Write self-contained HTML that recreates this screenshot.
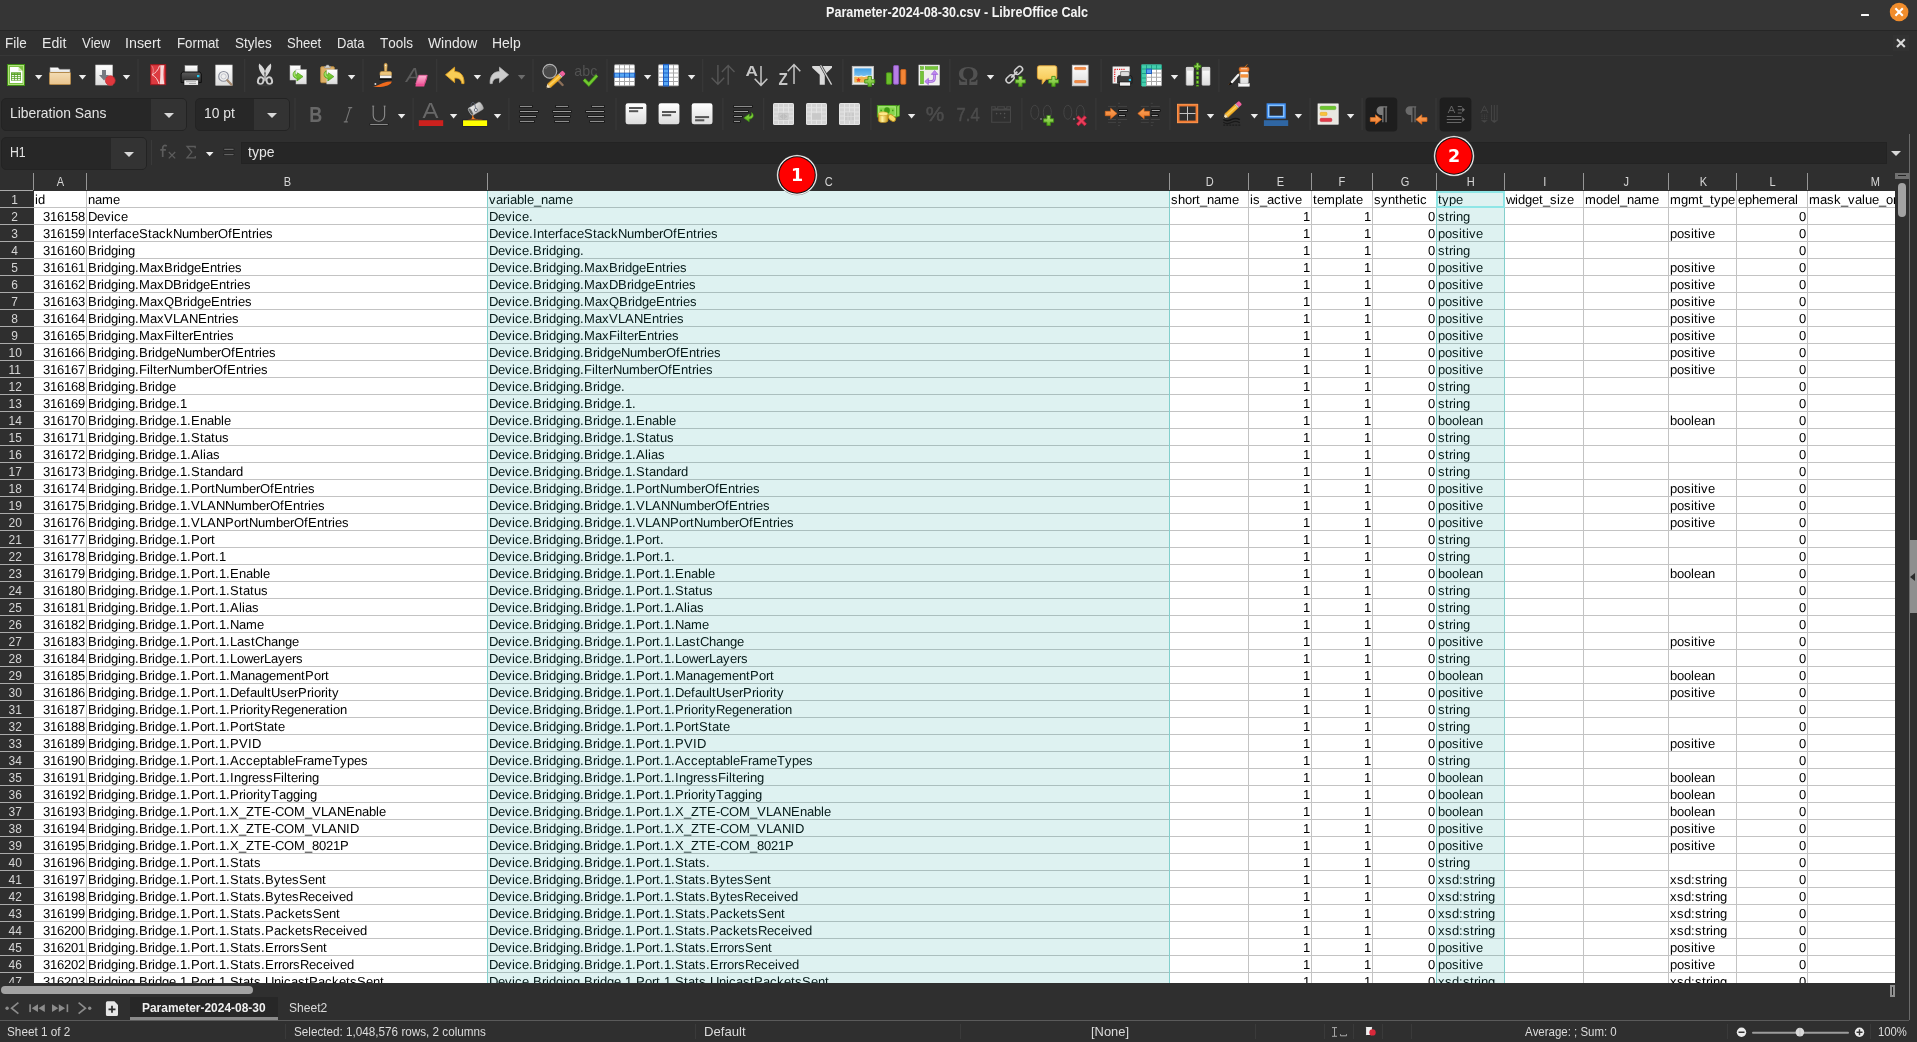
<!DOCTYPE html><html><head><meta charset="utf-8"><title>Parameter-2024-08-30.csv - LibreOffice Calc</title><style>
*{box-sizing:border-box;margin:0;padding:0}
html,body{width:1917px;height:1042px;overflow:hidden;background:#2f2f2f}
body{position:relative;font-family:"Liberation Sans",sans-serif;font-size:13px;color:#e4e4e4}
.abs{position:absolute}
#wrap{position:absolute;left:0;top:0;width:1917px;height:1042px;will-change:transform}
#title{left:0;top:0;width:1917px;height:30px;background:#353535}
#tline{left:0;top:30px;width:1917px;height:1px;background:#262626}
.menu{top:35px;line-height:16px;font-size:13.2px;color:#e6e6e6;white-space:nowrap}
.ut{line-height:20px;white-space:nowrap;font-kerning:none;transform-origin:0 0}
.sep{width:1px;background:#3a3a3a}
.combo{background:#272727;border:1px solid #232323;border-radius:5px;overflow:hidden}
.combo .btn{position:absolute;top:0;bottom:0;right:0;background:#333}
.combo .txt{position:absolute;left:8px;font-size:13.3px;color:#e0e0e0;white-space:nowrap}
.arr{width:0;height:0;border-left:4px solid transparent;border-right:4px solid transparent;border-top:5px solid #e8e8e8}
.arrb{width:0;height:0;border-left:5px solid transparent;border-right:5px solid transparent;border-top:5.2px solid #d8d8d8}
.arr.dim{border-top-color:#6a6a6a}
.arrs{width:0;height:0;border-left:3.5px solid transparent;border-right:3.5px solid transparent;border-top:4px solid #e8e8e8}
#grid{left:0;top:173px;width:1895px;height:810px;overflow:hidden;background:#fff}
#grid .hdr{background:#2f2f2f}
.ch{top:0;height:17px;line-height:18px;text-align:center;font-size:13px;color:#d6d6d6}
.ch span{display:inline-block;transform:scaleX(0.85)}
.rh span{display:inline-block;transform:scaleX(0.92)}
.rh{left:0;width:30px;height:17px;line-height:17px;text-align:center;font-size:13px;color:#d6d6d6}
.vl{top:18px;width:1px;height:800px;background:#c4c4c4}
.hl{left:33px;height:1px;width:1862px;background:#c4c4c4}
.hvl{top:0;width:1px;height:17px;background:#969696}
.c{height:17px;line-height:17px;font-size:13px;color:#000;white-space:nowrap;overflow:hidden;font-family:"Liberation Sans",sans-serif}
.c.r{text-align:right}
.sel{background:rgba(32,170,160,0.15)}
.status{top:1021px;height:21px;line-height:21px;font-size:12.6px;color:#d8d8d8;white-space:nowrap}
.ssep{top:1024px;width:1px;height:15px;background:#3a3a3a}
</style></head><body><div id="wrap">
<div id="title" class="abs"></div>
<div class="abs ut" style="left:825.60px;top:1.88px;font-size:14.20px;font-weight:bold;color:#f4f4f4;transform:scaleX(0.8862);">Parameter-2024-08-30.csv - LibreOffice Calc</div>
<div class="abs" style="left:1861px;top:13.5px;width:8.4px;height:2.9px;background:#fafafa;border-radius:0.5px"></div>
<svg class="abs" style="left:1889px;top:2px" width="20" height="20" viewBox="0 0 20 20"><circle cx="10.1" cy="10" r="9.3" fill="#f18d2c"/><path d="M6.4 6.3 L13.8 13.7 M13.8 6.3 L6.4 13.7" stroke="#fff" stroke-width="2.1"/></svg>
<div id="tline" class="abs"></div>
<div class="abs ut" style="left:4.65px;top:33.08px;font-size:14.20px;color:#e8e8e8;transform:scaleX(0.9492);">File</div>
<div class="abs ut" style="left:41.70px;top:33.08px;font-size:14.20px;color:#e8e8e8;transform:scaleX(0.9970);">Edit</div>
<div class="abs ut" style="left:81.72px;top:33.08px;font-size:14.20px;color:#e8e8e8;transform:scaleX(0.9170);">View</div>
<div class="abs ut" style="left:125.49px;top:33.08px;font-size:14.20px;color:#e8e8e8;transform:scaleX(1.0055);">Insert</div>
<div class="abs ut" style="left:176.76px;top:33.08px;font-size:14.20px;color:#e8e8e8;transform:scaleX(0.9361);">Format</div>
<div class="abs ut" style="left:234.91px;top:33.08px;font-size:14.20px;color:#e8e8e8;transform:scaleX(0.9505);">Styles</div>
<div class="abs ut" style="left:287.02px;top:33.08px;font-size:14.20px;color:#e8e8e8;transform:scaleX(0.9224);">Sheet</div>
<div class="abs ut" style="left:336.78px;top:33.08px;font-size:14.20px;color:#e8e8e8;transform:scaleX(0.9157);">Data</div>
<div class="abs ut" style="left:379.72px;top:33.08px;font-size:14.20px;color:#e8e8e8;transform:scaleX(0.9490);">Tools</div>
<div class="abs ut" style="left:427.71px;top:33.08px;font-size:14.20px;color:#e8e8e8;transform:scaleX(0.9777);">Window</div>
<div class="abs ut" style="left:492.41px;top:33.08px;font-size:14.20px;color:#e8e8e8;transform:scaleX(0.9853);">Help</div>
<div class="abs" style="left:1893px;top:35px;width:16px;height:16px;background:#323232"></div>
<svg class="abs" style="left:1896px;top:38px" width="10" height="10" viewBox="0 0 10 10"><path d="M1 1.200 L8.800 9 M8.800 1.200 L1 9" stroke="#dcdcdc" stroke-width="2"/></svg>
<div class="abs" style="left:0;top:55px;width:1893px;height:1px;background:#373737"></div>
<svg class="abs" style="left:0;top:58px" width="1917" height="78" viewBox="0 58 1917 78">
<defs>
<linearGradient id="gplus" x1="0" y1="0" x2="0" y2="1"><stop offset="0" stop-color="#b6e77a"/><stop offset="1" stop-color="#5fb41f"/></linearGradient>
<linearGradient id="gpaper" x1="0" y1="0" x2="0" y2="1"><stop offset="0" stop-color="#ffffff"/><stop offset="1" stop-color="#dcdcdc"/></linearGradient>
<linearGradient id="gfold" x1="0" y1="0" x2="0" y2="1"><stop offset="0" stop-color="#f3dcb4"/><stop offset="1" stop-color="#e9c48e"/></linearGradient>
<linearGradient id="gblue" x1="0" y1="0" x2="0" y2="1"><stop offset="0" stop-color="#55a8f2"/><stop offset="1" stop-color="#2b6fd6"/></linearGradient>
<linearGradient id="gprn" x1="0" y1="0" x2="0" y2="1"><stop offset="0" stop-color="#5a5a5a"/><stop offset="1" stop-color="#2a2a2a"/></linearGradient>
<linearGradient id="gyel" x1="0" y1="0" x2="0" y2="1"><stop offset="0" stop-color="#fde28a"/><stop offset="1" stop-color="#f7c54a"/></linearGradient>
<linearGradient id="gora" x1="0" y1="0" x2="0" y2="1"><stop offset="0" stop-color="#fba65c"/><stop offset="1" stop-color="#ee7a2c"/></linearGradient>
<linearGradient id="ggrn" x1="0" y1="0" x2="0" y2="1"><stop offset="0" stop-color="#9be04e"/><stop offset="1" stop-color="#57b11c"/></linearGradient>
<linearGradient id="gpink" x1="0" y1="0" x2="0" y2="1"><stop offset="0" stop-color="#fbb4d2"/><stop offset="1" stop-color="#f0639f"/></linearGradient>
<linearGradient id="gsky" x1="0" y1="0" x2="0" y2="1"><stop offset="0" stop-color="#3f9fe6"/><stop offset="1" stop-color="#a9dcf5"/></linearGradient>
<linearGradient id="ggold" x1="0" y1="0" x2="1" y2="0"><stop offset="0" stop-color="#d9a520"/><stop offset="0.4" stop-color="#fff3a0"/><stop offset="1" stop-color="#c99718"/></linearGradient>
<linearGradient id="gbucket" x1="0" y1="0" x2="1" y2="1"><stop offset="0" stop-color="#f4f4f4"/><stop offset="1" stop-color="#a8a8a8"/></linearGradient>
</defs>
<rect x="7.5" y="64.5" width="17" height="21" fill="#7cc242" stroke="#3f8f14" stroke-width="1"/>
<rect x="8.5" y="65.5" width="15" height="19" fill="none" stroke="#b3e07f" stroke-width="1"/>
<path d="M10 67 h8.5 l4 4 v12 h-12.5z" fill="#fff"/>
<path d="M18.5 67 l4 4 h-4z" fill="#cfe9b0"/>
<rect x="11" y="72.300" width="10" height="8.400" fill="#5aa02c"/>
<path d="M11.800 75h2.300v1.200h-2.300zM14.900 75h2.300v1.200h-2.300zM18 75h2.300v1.200h-2.300zM11.800 77h2.300v1.200h-2.300zM14.900 77h2.300v1.200h-2.300zM18 77h2.300v1.200h-2.300zM11.800 79h2.300v1.200h-2.300zM14.900 79h2.300v1.200h-2.300zM18 79h2.300v1.200h-2.300z" fill="#eef8e2"/>
<path d="M11.800 73.100h2.300v0.700h-2.300zM14.900 73.100h2.300v0.700h-2.300zM18 73.100h2.300v0.700h-2.300z" fill="#8fcc5a"/>
<path d="M35.00 75.10 h7.400 l-3.700 4.300z" fill="#ececec"/>
<path d="M50 67.5 h8 l1.5 1.8 h10.5 v4 h-20z" fill="url(#gpaper)" stroke="#8a8a8a" stroke-width="0.6"/>
<rect x="49.5" y="72.5" width="21" height="12" rx="0.8" fill="url(#gfold)" stroke="#b48a4c" stroke-width="1"/>
<path d="M78.80 75.10 h7.400 l-3.700 4.300z" fill="#ececec"/>
<rect x="95.7" y="65" width="16.8" height="20" fill="url(#gpaper)" stroke="#c8c8c8" stroke-width="0.6"/>
<path d="M102 70 h4 v5 h3 l-5 5.5 l-5 -5.5 h3z" fill="#767a82"/>
<circle cx="110.3" cy="80.6" r="4.9" fill="#e0383e" stroke="#b9262c" stroke-width="0.7"/>
<path d="M122.80 75.10 h7.400 l-3.700 4.300z" fill="#ececec"/>
<rect x="137.5" y="59" width="1" height="33" fill="#3b3b3b"/>
<rect x="150.700" y="64.700" width="15" height="20" fill="#dc3a40" stroke="#a3181f" stroke-width="1"/>
<path d="M160.200 65.300 C160.600 70 160.400 79 159.700 84.300 L164.300 84.300 C163.300 78 163.200 71 164.200 65.300Z" fill="#fff" opacity="0.800"/>
<path d="M159.600 65.600 C158.300 70 155.500 73.200 152 74.700 C155.500 76.300 158 80 159 84" fill="none" stroke="#fbdcdc" stroke-width="0.900"/>
<path d="M151.500 65.600 C153.500 68 154 71 152.200 74.600" fill="none" stroke="#f4b8ba" stroke-width="0.600"/>
<rect x="185" y="65.7" width="12.3" height="7" fill="url(#gpaper)" stroke="#bdbdbd" stroke-width="0.5"/>
<path d="M182.5 72 h17.5 l1.3 2 v8.5 h-20.2 v-8.5z" fill="url(#gprn)" stroke="#0e0e0e" stroke-width="1"/>
<rect x="197" y="75" width="2.4" height="2.2" fill="#1ec8f0"/>
<rect x="184" y="80" width="14.4" height="5.3" fill="url(#gpaper)" stroke="#111" stroke-width="0.6"/>
<path d="M186 81.7 h10 M189 83.5 h7" stroke="#9a9a9a" stroke-width="0.8"/>
<rect x="215.7" y="65" width="16.5" height="20.3" fill="url(#gpaper)" stroke="#c8c8c8" stroke-width="0.6"/>
<circle cx="223.6" cy="76.4" r="4.9" fill="#efefef" stroke="#8a8e9c" stroke-width="1.1"/>
<circle cx="223.6" cy="76.4" r="2.6" fill="none" stroke="#b8bac4" stroke-width="0.8"/>
<path d="M227.3 80.2 l4.3 4.5" stroke="#a3876c" stroke-width="2.2" stroke-linecap="round"/>
<rect x="244.3" y="59" width="1" height="33" fill="#3b3b3b"/>
<path d="M259.200 63.600 C257.800 67.500 259.800 72.500 264.300 77.300 L266 75.600 C265.600 71 263.300 66.500 259.200 63.600z M270.800 63.600 C272.200 67.500 270.200 72.500 265.700 77.300 L264 75.600 C264.400 71 266.700 66.500 270.800 63.600z" fill="#d8d8d8"/>
<path d="M264.300 74 l0.700 -0.600 l0.700 0.600 l0.600 6 l-1.300 1.500 l-1.300 -1.500z" fill="#a8a8a8"/>
<ellipse cx="260.700" cy="80.700" rx="2.700" ry="3.400" fill="none" stroke="#cdcdcd" stroke-width="1.900" transform="rotate(18 260.700 80.700)"/>
<ellipse cx="269.300" cy="80.700" rx="2.700" ry="3.400" fill="none" stroke="#cdcdcd" stroke-width="1.900" transform="rotate(-18 269.300 80.700)"/>
<ellipse cx="265" cy="85.300" rx="8" ry="0.900" fill="#3a3a3a"/>
<rect x="290" y="65.7" width="10.3" height="14.3" fill="url(#gpaper)" stroke="#c4c4c4" stroke-width="0.5"/>
<rect x="296" y="69.7" width="10.3" height="14.3" fill="url(#gpaper)" stroke="#c4c4c4" stroke-width="0.5"/>
<g transform="translate(0.0 0)"><path d="M295.3 70.700 C292.300 72.500 291.900 77.700 297.100 78.600 L296.900 81 L303 76.600 L297.500 72.800 L297.300 75.100 C295.300 74.900 294.400 72.900 295.300 70.700Z" fill="url(#ggrn)" stroke="#4aa018" stroke-width="0.700" stroke-linejoin="round"/><path d="M294.600 72.500 C293.600 74.500 294.300 76.600 296.600 77.300" fill="none" stroke="#c6f09a" stroke-width="0.700"/></g>
<rect x="320.7" y="66.7" width="13.6" height="16" rx="1" fill="#dfb066" stroke="#b98a3f" stroke-width="0.9"/>
<path d="M324.6 68 v-1.6 h1.3 l0.6 -1.3 h2.2 l0.6 1.3 h1.3 v1.6z" fill="#d4d4d4" stroke="#8f8f8f" stroke-width="0.6"/>
<rect x="326.8" y="69.7" width="10.4" height="14.3" fill="url(#gpaper)" stroke="#c4c4c4" stroke-width="0.5"/>
<g transform="translate(30.9 0)"><path d="M295.3 70.700 C292.300 72.500 291.900 77.700 297.100 78.600 L296.900 81 L303 76.600 L297.500 72.800 L297.300 75.100 C295.300 74.900 294.400 72.900 295.300 70.700Z" fill="url(#ggrn)" stroke="#4aa018" stroke-width="0.700" stroke-linejoin="round"/><path d="M294.600 72.500 C293.600 74.500 294.300 76.600 296.600 77.300" fill="none" stroke="#c6f09a" stroke-width="0.700"/></g>
<path d="M347.90 75.10 h7.400 l-3.700 4.300z" fill="#ececec"/>
<rect x="362.5" y="59" width="1" height="33" fill="#3b3b3b"/>
<path d="M384.2 65 a1.5 1.7 0 0 1 3 0 l-0.5 6.5 h-2z" fill="#e8bf73" stroke="#c99846" stroke-width="0.6"/>
<circle cx="385.7" cy="65.3" r="0.6" fill="#fff"/>
<path d="M380 75.3 v-2.3 a1.5 1.5 0 0 1 1.5 -1.5 h8.5 a1.5 1.5 0 0 1 1.5 1.5 v2.3z" fill="#eac47c" stroke="#c99846" stroke-width="0.6"/>
<rect x="380" y="75.5" width="11.5" height="2.6" fill="#f2f2f2"/>
<rect x="379.6" y="78.8" width="12.2" height="1.3" fill="#0c0c0c"/>
<path d="M373 86.6 C377 86 380 84 383 83 C386 82 389 81.5 391.8 81.6 C391.5 84 388 85.8 384 86.4 C380 87 376 87.2 373 86.6z" fill="#f06a1c"/>
<rect x="374.6" y="83.2" width="1.6" height="1.6" fill="#f4f4f4"/>
<text x="406" y="81.8" font-family="Liberation Sans,sans-serif" font-style="italic" font-size="21" fill="#5c5c5c">A</text>
<path d="M418.8 75.3 h8.4 l-3 8.6 h-8.4z" fill="url(#gpink)" stroke="#ee5f9f" stroke-width="0.8" stroke-linejoin="round"/>
<path d="M415.8 83.9 h8.4 v2.6 h-8.8z" fill="#ec4f93"/>
<path d="M424.2 83.9 l3 -8.6 v2.8 l-3 8.4z" fill="#e0508e"/>
<rect x="436.3" y="59" width="1" height="33" fill="#3b3b3b"/>
<path d="M445.5 74.8 L454.6 67.2 V71.6 C460.5 71.6 464.3 75.5 464 83.6 L461.8 83.6 C461.5 79.6 459 78 454.6 78 V82.6z" fill="#f9cd55" stroke="#e3a322" stroke-width="0.9" stroke-linejoin="round"/>
<path d="M473.70 75.10 h7.400 l-3.700 4.300z" fill="#ececec"/>
<path d="M508.6 74.8 L499.5 67.2 V71.6 C493.6 71.6 489.8 75.5 490.1 83.6 L492.3 83.6 C492.6 79.6 495.1 78 499.5 78 V82.6z" fill="#cdcdcd" stroke="#b8b8b8" stroke-width="0.8" stroke-linejoin="round"/>
<path d="M517.90 75.10 h7.400 l-3.700 4.300z" fill="#6c6c6c"/>
<rect x="532.5" y="59" width="1" height="33" fill="#3b3b3b"/>
<path d="M555 77 l7.6 8" stroke="#8c6f58" stroke-width="2.4" stroke-linecap="round"/>
<circle cx="549.8" cy="71.2" r="6.9" fill="#4a4a4a" stroke="#b4b4b4" stroke-width="1.2"/>
<path d="M545.5 69 a5 5 0 0 1 6 -2.5" stroke="#666" stroke-width="1.2" fill="none"/>
<g transform="rotate(-42 556.5 79)"><rect x="546.5" y="76.6" width="14.5" height="4.8" fill="#f5b52c" stroke="#d98e10" stroke-width="0.5"/><rect x="546.5" y="78.2" width="14.5" height="1.4" fill="#fbd060"/><rect x="561" y="76.6" width="1.5" height="4.8" fill="#c8c8c8"/><path d="M562.5 76.6 h3 a1.2 1.2 0 0 1 1.2 1.2 v2.4 a1.2 1.2 0 0 1 -1.2 1.2 h-3z" fill="#f0609c"/><path d="M546.5 76.6 l-4 2.4 l4 2.4z" fill="#f7e2b8"/><path d="M543.9 78.1 l-1.4 0.9 l1.4 0.9z" fill="#222"/></g>
<text x="574.3" y="76.2" font-family="Liberation Sans,sans-serif" font-size="14.5" fill="#525252" textLength="23" lengthAdjust="spacingAndGlyphs">abc</text>
<path d="M584 79.6 l4.8 4.8 l8.2 -9" fill="none" stroke="#3f8f14" stroke-width="3.6" stroke-linejoin="miter"/>
<path d="M584 79.6 l4.8 4.8 l8.2 -9" fill="none" stroke="#72c832" stroke-width="2.2" stroke-linejoin="miter"/>
<rect x="606.5" y="59" width="1" height="33" fill="#3b3b3b"/>
<rect x="614.00" y="64.20" width="21.00" height="22.00" rx="1.5" fill="#a9a9a9"/>
<rect x="613.70" y="72.60" width="21.60" height="5.20" fill="#1f5fc4"/>
<path d="M615.00 65.20h4.00v3.20h-4.00zM620.00 65.20h4.00v3.20h-4.00zM625.00 65.20h4.00v3.20h-4.00zM630.00 65.20h4.00v3.20h-4.00zM615.00 69.40h4.00v3.20h-4.00zM620.00 69.40h4.00v3.20h-4.00zM625.00 69.40h4.00v3.20h-4.00zM630.00 69.40h4.00v3.20h-4.00zM615.00 77.80h4.00v3.20h-4.00zM620.00 77.80h4.00v3.20h-4.00zM625.00 77.80h4.00v3.20h-4.00zM630.00 77.80h4.00v3.20h-4.00zM615.00 82.00h4.00v3.20h-4.00zM620.00 82.00h4.00v3.20h-4.00zM625.00 82.00h4.00v3.20h-4.00zM630.00 82.00h4.00v3.20h-4.00z" fill="#ffffff"/>
<path d="M615.00 73.60h4.00v3.20h-4.00zM620.00 73.60h4.00v3.20h-4.00zM625.00 73.60h4.00v3.20h-4.00zM630.00 73.60h4.00v3.20h-4.00z" fill="#58a8f4"/>
<path d="M643.90 75.10 h7.400 l-3.700 4.300z" fill="#ececec"/>
<rect x="658.00" y="64.20" width="21.00" height="22.00" rx="1.5" fill="#a9a9a9"/>
<rect x="663.00" y="63.90" width="6.00" height="22.60" fill="#1f5fc4"/>
<path d="M659.00 65.20h4.00v3.20h-4.00zM669.00 65.20h4.00v3.20h-4.00zM674.00 65.20h4.00v3.20h-4.00zM659.00 69.40h4.00v3.20h-4.00zM669.00 69.40h4.00v3.20h-4.00zM674.00 69.40h4.00v3.20h-4.00zM659.00 73.60h4.00v3.20h-4.00zM669.00 73.60h4.00v3.20h-4.00zM674.00 73.60h4.00v3.20h-4.00zM659.00 77.80h4.00v3.20h-4.00zM669.00 77.80h4.00v3.20h-4.00zM674.00 77.80h4.00v3.20h-4.00zM659.00 82.00h4.00v3.20h-4.00zM669.00 82.00h4.00v3.20h-4.00zM674.00 82.00h4.00v3.20h-4.00z" fill="#ffffff"/>
<path d="M664.00 65.20h4.00v3.20h-4.00zM664.00 69.40h4.00v3.20h-4.00zM664.00 73.60h4.00v3.20h-4.00zM664.00 77.80h4.00v3.20h-4.00zM664.00 82.00h4.00v3.20h-4.00z" fill="#58a8f4"/>
<path d="M687.90 75.10 h7.400 l-3.700 4.300z" fill="#ececec"/>
<rect x="702.3" y="59" width="1" height="33" fill="#3b3b3b"/>
<path d="M717.9 65 V84 M711.6 77.8 L717.9 84.3 L724.2 77.8 M728.2 84.7 V65.6 M721.9 72 L728.2 65.4 L734.5 72" fill="none" stroke="#575757" stroke-width="1.4"/>
<text x="745.6" y="76.3" font-family="Liberation Sans,sans-serif" font-weight="bold" font-size="14.8" fill="#c6c6c6" textLength="12.400" lengthAdjust="spacingAndGlyphs">A</text>
<path d="M761 66 V85 M754.7 78.8 L761 85.3 L767.3 78.8" fill="none" stroke="#c6c6c6" stroke-width="1.5"/>
<text x="778.4" y="84.7" font-family="Liberation Sans,sans-serif" font-weight="bold" font-size="16.3" fill="#c6c6c6" textLength="9.300" lengthAdjust="spacingAndGlyphs">Z</text>
<path d="M794 84 V64.8 M787.7 71.2 L794 64.6 L800.3 71.2" fill="none" stroke="#c6c6c6" stroke-width="1.5"/>
<path d="M812.2 66 h19.8 v1.8 l-7.2 7 v9.9 h-5.1 v-9.9 l-7.5 -7z" fill="#dadada"/>
<path d="M820.6 65.2 L831.6 84.6" stroke="#2f2f2f" stroke-width="2.6"/>
<path d="M820.6 65.2 L831.6 84.6" stroke="#cfcfcf" stroke-width="1.3"/>
<rect x="842.4" y="59" width="1" height="33" fill="#3b3b3b"/>
<rect x="852.3" y="66.4" width="21.2" height="18.2" fill="#ececec" stroke="#bdbdbd" stroke-width="0.9"/>
<rect x="854.3" y="68.4" width="17.2" height="14.2" fill="url(#gsky)"/>
<path d="M854.3 76.5 c2 -1.2 3.5 0.8 5.5 -0.2 c2 -1 3.5 1 5.5 0 c2 -1 4 0.2 6.200 -0.6 v6.9 h-17.2z" fill="#f2b552"/>
<path d="M854.3 76.5 c2 -1.2 3.5 0.8 5.5 -0.2 c2 -1 3.5 1 5.5 0 c2 -1 4 0.2 6.200 -0.6" fill="none" stroke="#fff" stroke-width="0.9"/>
<path d="M858.5 77.5 l1 1.5 l1.4 0.4 l-1.2 1 l0.2 1.6 l-1.4 -0.8 l-1.4 0.8 l0.3 -1.6 l-1.2 -1 l1.5 -0.4z" fill="#ee3a1c"/>
<path d="M868.00 76.40 h3.40 v3.30 h3.30 v3.40 h-3.30 v3.30 h-3.40 v-3.30 h-3.30 v-3.40 h3.30 z" fill="url(#gplus)" stroke="#3f8f14" stroke-width="0.9" stroke-linejoin="round"/>
<rect x="886.4" y="72.8" width="5" height="11.4" rx="0.8" fill="#6cbf2c" stroke="#4a9a14" stroke-width="0.8"/>
<rect x="893.6" y="65.6" width="5" height="18.6" rx="0.8" fill="#b77fe6" stroke="#9257c9" stroke-width="0.8"/>
<rect x="900.8" y="69.6" width="5" height="14.6" rx="0.8" fill="#f38636" stroke="#d9661a" stroke-width="0.8"/>
<rect x="919" y="65.2" width="20.2" height="19.8" fill="#efefed" stroke="#fafafa" stroke-width="0.8"/>
<rect x="920.4" y="66.6" width="3.2" height="2.8" fill="#74c438" stroke="#56a81e" stroke-width="0.5"/>
<rect x="925.2" y="66.6" width="12.6" height="2.8" fill="#74c438" stroke="#56a81e" stroke-width="0.5"/>
<rect x="920.4" y="71.2" width="3.2" height="12.6" fill="#74c438" stroke="#56a81e" stroke-width="0.5"/>
<path d="M927.5 81.5 h3.5 c2.8 0 3.6 -1.8 3.6 -4.3 v-3.5" fill="none" stroke="#9b5fd6" stroke-width="2.6"/>
<path d="M927.5 81.5 h3.5 c2.8 0 3.6 -1.8 3.6 -4.3 v-3.5" fill="none" stroke="#c99cf2" stroke-width="1.2"/>
<path d="M931.3 74.4 l3.3 -3.9 l3.3 3.9z M928.4 78.3 l-3.6 3.2 l3.6 3.200z" fill="#c08af0" stroke="#9b5fd6" stroke-width="0.7" stroke-linejoin="round"/>
<rect x="949.4" y="59" width="1" height="33" fill="#3b3b3b"/>
<text x="957.800" y="84.700" font-family="Liberation Serif,serif" font-weight="bold" font-size="27" fill="#525252" textLength="21" lengthAdjust="spacingAndGlyphs">&#937;</text>
<path d="M986.80 75.10 h7.400 l-3.700 4.300z" fill="#ececec"/>
<g transform="rotate(-45 1014.3 74.6)" fill="none" stroke="#d2d2d2" stroke-width="1.5"><rect x="1003.800" y="71.800" width="9" height="5.600" rx="2.800"/><rect x="1015.800" y="71.800" width="9" height="5.600" rx="2.800"/><path d="M1010 74.600 h8.600" stroke-width="1.800"/></g>
<path d="M1018.70 76.40 h3.40 v3.30 h3.30 v3.40 h-3.30 v3.30 h-3.40 v-3.30 h-3.30 v-3.40 h3.30 z" fill="url(#gplus)" stroke="#3f8f14" stroke-width="0.9" stroke-linejoin="round"/>
<path d="M1039.4 65.8 h15.4 a2 2 0 0 1 2 2 v9.400 a2 2 0 0 1 -2 2 h-8.6 l-4 5 v-5 h-2.800 a2 2 0 0 1 -2 -2 v-9.400 a2 2 0 0 1 2 -2z" fill="url(#gyel)" stroke="#e7a73a" stroke-width="0.9"/>
<path d="M1051.80 76.40 h3.40 v3.30 h3.30 v3.40 h-3.30 v3.30 h-3.40 v-3.30 h-3.30 v-3.40 h3.30 z" fill="url(#gplus)" stroke="#3f8f14" stroke-width="0.9" stroke-linejoin="round"/>
<rect x="1072.3" y="65.2" width="15.8" height="20.6" fill="url(#gpaper)" stroke="#c9c9c9" stroke-width="0.8"/>
<rect x="1074.6" y="67.3" width="11.2" height="2.3" rx="0.6" fill="#f28a42" stroke="#e0661c" stroke-width="0.5"/>
<rect x="1074.6" y="80.5" width="11.2" height="2.3" rx="0.6" fill="#f28a42" stroke="#e0661c" stroke-width="0.5"/>
<rect x="1100.6" y="59" width="1" height="33" fill="#3b3b3b"/>
<rect x="1112.9" y="66.8" width="16.6" height="16.4" fill="#f3f3f3" stroke="#cfcfcf" stroke-width="0.6"/>
<path d="M1114.6 69.4 h11" stroke="#e8262a" stroke-width="1.3" stroke-dasharray="1.2 1"/>
<path d="M1114.7 69.4 v12.5" stroke="#e8262a" stroke-width="1.3" stroke-dasharray="1.2 1"/>
<path d="M1118.600 75.700 h12.400 l1 1.500 v6 h-14.400 v-6z" fill="#3c3c3c" stroke="#141414" stroke-width="0.800"/>
<rect x="1120.800" y="71.800" width="8.400" height="4.400" fill="#f4f4f4" stroke="#3a3a3a" stroke-width="0.700"/>
<rect x="1122" y="73" width="6" height="2.400" fill="#dcdcdc"/>
<rect x="1128.8" y="78.900" width="2.2" height="2" fill="#1ec8f0"/>
<rect x="1119.7" y="82" width="10.6" height="4" fill="#f2f2f2" stroke="#0c0c0c" stroke-width="0.6"/>
<rect x="1141.00" y="64.20" width="21.00" height="22.00" rx="1.5" fill="#a9a9a9"/>
<path d="M1142.00 65.20h4.00v3.20h-4.00zM1147.00 65.20h4.00v3.20h-4.00zM1152.00 65.20h4.00v3.20h-4.00zM1157.00 65.20h4.00v3.20h-4.00zM1142.00 69.40h4.00v3.20h-4.00zM1147.00 69.40h4.00v3.20h-4.00zM1152.00 69.40h4.00v3.20h-4.00zM1157.00 69.40h4.00v3.20h-4.00zM1142.00 73.60h4.00v3.20h-4.00zM1147.00 73.60h4.00v3.20h-4.00zM1152.00 73.60h4.00v3.20h-4.00zM1157.00 73.60h4.00v3.20h-4.00zM1142.00 77.80h4.00v3.20h-4.00zM1147.00 77.80h4.00v3.20h-4.00zM1152.00 77.80h4.00v3.20h-4.00zM1157.00 77.80h4.00v3.20h-4.00zM1142.00 82.00h4.00v3.20h-4.00zM1147.00 82.00h4.00v3.20h-4.00zM1152.00 82.00h4.00v3.20h-4.00zM1157.00 82.00h4.00v3.20h-4.00z" fill="#ffffff"/>
<path d="M1141 65.700 a1.500 1.500 0 0 1 1.500 -1.500 h18 a1.500 1.500 0 0 1 1.500 1.500 v3.900 h-16 v16.600 h-3.500 a1.500 1.500 0 0 1 -1.500 -1.500z" fill="#1fa084"/>
<path d="M1142 65.200h4v3.400h-4zM1147 65.200h4v3.400h-4zM1152 65.200h4v3.400h-4zM1157 65.200h4v3.400h-4zM1142 69.600h4v3.400h-4zM1142 74h4v3.400h-4zM1142 78.400h4v3.400h-4zM1142 82.800h4v3.400h-4z" fill="#45cfae"/>
<rect x="1146.500" y="69.100" width="5" height="4.400" fill="#5a9ef0" stroke="#1f5fc4" stroke-width="1"/>
<path d="M1170.80 75.10 h7.400 l-3.700 4.300z" fill="#ececec"/>
<rect x="1186.2" y="67.3" width="7.200" height="18" rx="0.8" fill="url(#gpaper)" stroke="#c8c8c8" stroke-width="0.6"/>
<rect x="1202" y="67.3" width="8" height="18" rx="0.800" fill="url(#gpaper)" stroke="#c8c8c8" stroke-width="0.6"/>
<rect x="1186.2" y="67.3" width="7.2" height="3.400" fill="#d4d4d4"/><rect x="1202" y="67.3" width="8" height="3.400" fill="#d4d4d4"/>
<path d="M1197.5 71.500 v15" stroke="#4a9a14" stroke-width="2.800" stroke-dasharray="3.200 1.300"/>
<path d="M1197.5 72 v14" stroke="#86d23c" stroke-width="1.300" stroke-dasharray="2.2 2.300"/>
<path d="M1196.38 63.10 h2.24 v2.18 h2.18 v2.24 h-2.18 v2.18 h-2.24 v-2.18 h-2.18 v-2.24 h2.18 z" fill="url(#gplus)" stroke="#3f8f14" stroke-width="0.9" stroke-linejoin="round"/>
<rect x="1218.4" y="59" width="1" height="33" fill="#3b3b3b"/>
<path d="M1229 84.800 L1247.300 64.400" stroke="#e07a1a" stroke-width="0.9"/>
<path d="M1231.800 82.200 L1238.200 75" stroke="#ececec" stroke-width="2.400" stroke-linecap="round"/>
<path d="M1228.600 85.200 l3.800 -1.200 l-2 -2z" fill="#0a0a0a"/>
<rect x="1240.300" y="71.500" width="8" height="12" rx="1.500" fill="url(#gpaper)" stroke="#bdbdbd" stroke-width="0.6"/>
<rect x="1239.200" y="67.200" width="9.800" height="4.400" rx="1.500" fill="#f28336" stroke="#d9661a" stroke-width="0.6"/>
<path d="M1241 68.800 h6.200" stroke="#fbd2b0" stroke-width="1"/>
<rect x="1240.300" y="74.200" width="8" height="3.400" fill="#f6923e"/>
<rect x="1238.300" y="83.600" width="11.200" height="2.800" fill="#f6f6f6" stroke="#cfcfcf" stroke-width="0.5"/>
<rect x="294.5" y="98" width="1" height="32" fill="#3b3b3b"/>
<text x="309.3" y="122.3" font-family="Liberation Sans,sans-serif" font-weight="bold" font-size="21.4" fill="#686868" textLength="13" lengthAdjust="spacingAndGlyphs">B</text>
<path d="M348.2 107.600 h4 M343.800 121.900 h4 M350.300 107.600 L345.700 121.900" stroke="#777" stroke-width="1.1" fill="none"/>
<path d="M373.200 106 V115.600 a5.700 5.700 0 0 0 11.400 0 V106" stroke="#8a8a8a" stroke-width="1.1" fill="none"/>
<path d="M372.200 106.100 h2 M383.600 106.100 h2" stroke="#8a8a8a" stroke-width="0.9"/>
<rect x="369.300" y="123.200" width="19.400" height="2.300" rx="0.8" fill="#1e1e1e"/><rect x="370.200" y="123.900" width="17.600" height="0.9" fill="#a6a6a6"/>
<path d="M397.90 114.10 h7.400 l-3.700 4.300z" fill="#ececec"/>
<rect x="412.6" y="98" width="1" height="32" fill="#3b3b3b"/>
<text x="422.6" y="118" font-family="Liberation Sans,sans-serif" font-size="21.5" fill="#686868" textLength="16" lengthAdjust="spacingAndGlyphs">A</text>
<rect x="418.800" y="120.200" width="24.400" height="5.800" fill="#cc211e"/>
<path d="M449.90 114.10 h7.400 l-3.700 4.300z" fill="#ececec"/>
<g transform="rotate(-31 470.900 111.700)"><path d="M470.900 107.500 h11.400 a1.800 4.200 0 0 1 0 8.400 h-11.400z" fill="url(#gbucket)" stroke="#9a9a9a" stroke-width="0.400"/><ellipse cx="470.900" cy="111.700" rx="1.500" ry="4.200" fill="#5c5e5c" stroke="#cfd2d6" stroke-width="0.600"/></g>
<path d="M471.300 106.300 C470.300 103 473.500 100.800 474.600 104 C475.200 106 475.500 107.500 475.800 108.500" fill="none" stroke="#596070" stroke-width="0.900"/>
<circle cx="475.900" cy="110" r="1.500" fill="#fff" stroke="#4e5566" stroke-width="0.800"/>
<path d="M472.600 114.500 c0.800 1.500 1 3 2 4 c1.500 0.800 6 0.500 8.500 1.300 h-16 c2.500 -0.600 4 -0.500 4.800 -1.600 c0.600 -1 0.300 -2.500 0.700 -3.700z" fill="#f47c20"/>
<rect x="463" y="120.200" width="24.300" height="5.800" fill="#ffff00"/>
<rect x="462.800" y="119.900" width="24.700" height="6.400" fill="none" stroke="#17172c" stroke-width="0.500"/>
<path d="M493.80 114.10 h7.400 l-3.700 4.300z" fill="#ececec"/>
<rect x="508.4" y="98" width="1" height="32" fill="#3b3b3b"/>
<rect x="519.0" y="104.9" width="14.0" height="3" rx="1.2" fill="#1c1c1c"/>
<rect x="520.0" y="105.9" width="12.0" height="1" fill="#9a9a9a"/>
<rect x="519.0" y="110.0" width="20.0" height="3" rx="1.2" fill="#1c1c1c"/>
<rect x="520.0" y="111.0" width="18.0" height="1" fill="#9a9a9a"/>
<rect x="519.0" y="115.0" width="18.0" height="3" rx="1.2" fill="#1c1c1c"/>
<rect x="520.0" y="116.0" width="16.0" height="1" fill="#9a9a9a"/>
<rect x="519.0" y="119.9" width="16.0" height="3" rx="1.2" fill="#1c1c1c"/>
<rect x="520.0" y="120.9" width="14.0" height="1" fill="#9a9a9a"/>
<rect x="555.0" y="104.9" width="14.0" height="3" rx="1.2" fill="#1c1c1c"/>
<rect x="556.0" y="105.9" width="12.0" height="1" fill="#9a9a9a"/>
<rect x="552.0" y="110.0" width="20.0" height="3" rx="1.2" fill="#1c1c1c"/>
<rect x="553.0" y="111.0" width="18.0" height="1" fill="#9a9a9a"/>
<rect x="553.0" y="115.0" width="18.0" height="3" rx="1.2" fill="#1c1c1c"/>
<rect x="554.0" y="116.0" width="16.0" height="1" fill="#9a9a9a"/>
<rect x="554.0" y="119.9" width="16.0" height="3" rx="1.2" fill="#1c1c1c"/>
<rect x="555.0" y="120.9" width="14.0" height="1" fill="#9a9a9a"/>
<rect x="591.0" y="104.9" width="14.0" height="3" rx="1.2" fill="#1c1c1c"/>
<rect x="592.0" y="105.9" width="12.0" height="1" fill="#9a9a9a"/>
<rect x="585.0" y="110.0" width="20.0" height="3" rx="1.2" fill="#1c1c1c"/>
<rect x="586.0" y="111.0" width="18.0" height="1" fill="#9a9a9a"/>
<rect x="587.0" y="115.0" width="18.0" height="3" rx="1.2" fill="#1c1c1c"/>
<rect x="588.0" y="116.0" width="16.0" height="1" fill="#9a9a9a"/>
<rect x="589.0" y="119.9" width="16.0" height="3" rx="1.2" fill="#1c1c1c"/>
<rect x="590.0" y="120.9" width="14.0" height="1" fill="#9a9a9a"/>
<rect x="615.5" y="98" width="1" height="32" fill="#3b3b3b"/>
<rect x="625.6" y="103.300" width="20.800" height="21" rx="2.300" fill="url(#gpaper)"/>
<rect x="629.0" y="107.0" width="14" height="2" fill="#555"/><rect x="629.0" y="110.2" width="9.200" height="2" fill="#555"/>
<rect x="658.6" y="103.300" width="20.800" height="21" rx="2.300" fill="url(#gpaper)"/>
<rect x="662.0" y="111.0" width="14" height="2" fill="#555"/><rect x="662.0" y="114.2" width="9.200" height="2" fill="#555"/>
<rect x="691.7" y="103.300" width="20.800" height="21" rx="2.300" fill="url(#gpaper)"/>
<rect x="695.1" y="116.1" width="14" height="2" fill="#555"/><rect x="695.1" y="119.3" width="9.200" height="2" fill="#555"/>
<rect x="722.4" y="98" width="1" height="32" fill="#3b3b3b"/>
<rect x="733.0" y="104.9" width="20.0" height="3" rx="1.2" fill="#1c1c1c"/>
<rect x="734.0" y="105.9" width="18.0" height="1" fill="#9a9a9a"/>
<rect x="733.0" y="110.0" width="16.0" height="3" rx="1.2" fill="#1c1c1c"/>
<rect x="734.0" y="111.0" width="14.0" height="1" fill="#9a9a9a"/>
<rect x="733.0" y="115.0" width="10.0" height="3" rx="1.2" fill="#1c1c1c"/>
<rect x="734.0" y="116.0" width="8.0" height="1" fill="#9a9a9a"/>
<rect x="733.0" y="119.9" width="8.0" height="3" rx="1.2" fill="#1c1c1c"/>
<rect x="734.0" y="120.9" width="6.0" height="1" fill="#9a9a9a"/>
<path d="M751.600 112.600 c2.800 2.200 2 6.400 -2.400 6.600 v2.500 l-5.400 -3.800 l5.400 -3.800 v2.300 c2.200 0 3.100 -1.600 2.400 -3.800z" fill="url(#ggrn)" stroke="#3f9414" stroke-width="0.700" stroke-linejoin="round"/>
<rect x="763.3" y="98" width="1" height="32" fill="#3b3b3b"/>
<rect x="773.00" y="103.00" width="21.00" height="22.00" rx="1.5" fill="#e4e4e4"/>
<path d="M774.00 104.00h4.00v3.20h-4.00zM779.00 104.00h4.00v3.20h-4.00zM784.00 104.00h4.00v3.20h-4.00zM789.00 104.00h4.00v3.20h-4.00zM774.00 108.20h4.00v3.20h-4.00zM779.00 108.20h4.00v3.20h-4.00zM784.00 108.20h4.00v3.20h-4.00zM789.00 108.20h4.00v3.20h-4.00zM774.00 112.40h4.00v3.20h-4.00zM779.00 112.40h4.00v3.20h-4.00zM784.00 112.40h4.00v3.20h-4.00zM789.00 112.40h4.00v3.20h-4.00zM774.00 116.60h4.00v3.20h-4.00zM779.00 116.60h4.00v3.20h-4.00zM784.00 116.60h4.00v3.20h-4.00zM789.00 116.60h4.00v3.20h-4.00zM774.00 120.80h4.00v3.20h-4.00zM779.00 120.80h4.00v3.20h-4.00zM784.00 120.80h4.00v3.20h-4.00zM789.00 120.80h4.00v3.20h-4.00z" fill="#d4d4d4"/>
<rect x="778.800" y="113.200" width="9.400" height="6.500" fill="#cdcdcd" stroke="#bdbdbd" stroke-width="0.600"/><path d="M782.800 114.400 v4.200 l-2.800 -2.100z M784.300 114.400 v4.200 l2.800 -2.100z" fill="#c0c0c0" stroke="#b0b0b0" stroke-width="0.400"/>
<rect x="806.00" y="103.00" width="21.00" height="22.00" rx="1.5" fill="#e4e4e4"/>
<path d="M807.00 104.00h4.00v3.20h-4.00zM812.00 104.00h4.00v3.20h-4.00zM817.00 104.00h4.00v3.20h-4.00zM822.00 104.00h4.00v3.20h-4.00zM807.00 108.20h4.00v3.20h-4.00zM812.00 108.20h4.00v3.20h-4.00zM817.00 108.20h4.00v3.20h-4.00zM822.00 108.20h4.00v3.20h-4.00zM807.00 112.40h4.00v3.20h-4.00zM812.00 112.40h4.00v3.20h-4.00zM817.00 112.40h4.00v3.20h-4.00zM822.00 112.40h4.00v3.20h-4.00zM807.00 116.60h4.00v3.20h-4.00zM812.00 116.60h4.00v3.20h-4.00zM817.00 116.60h4.00v3.20h-4.00zM822.00 116.60h4.00v3.20h-4.00zM807.00 120.80h4.00v3.20h-4.00zM812.00 120.80h4.00v3.20h-4.00zM817.00 120.80h4.00v3.20h-4.00zM822.00 120.80h4.00v3.20h-4.00z" fill="#d4d4d4"/>
<rect x="812" y="113.200" width="9.200" height="6.500" fill="#c9c9c9"/>
<rect x="839.00" y="103.00" width="21.00" height="22.00" rx="1.5" fill="#e4e4e4"/>
<path d="M840.00 104.00h4.00v3.20h-4.00zM845.00 104.00h4.00v3.20h-4.00zM850.00 104.00h4.00v3.20h-4.00zM855.00 104.00h4.00v3.20h-4.00zM840.00 108.20h4.00v3.20h-4.00zM845.00 108.20h4.00v3.20h-4.00zM850.00 108.20h4.00v3.20h-4.00zM855.00 108.20h4.00v3.20h-4.00zM840.00 112.40h4.00v3.20h-4.00zM845.00 112.40h4.00v3.20h-4.00zM850.00 112.40h4.00v3.20h-4.00zM855.00 112.40h4.00v3.20h-4.00zM840.00 116.60h4.00v3.20h-4.00zM845.00 116.60h4.00v3.20h-4.00zM850.00 116.60h4.00v3.20h-4.00zM855.00 116.60h4.00v3.20h-4.00zM840.00 120.80h4.00v3.20h-4.00zM845.00 120.80h4.00v3.20h-4.00zM850.00 120.80h4.00v3.20h-4.00zM855.00 120.80h4.00v3.20h-4.00z" fill="#d4d4d4"/>
<rect x="845" y="112.500" width="9" height="8" fill="#cacaca"/><path d="M848 112.500 v8 M851 112.500 v8 M845 116.500 h9" stroke="#dcdcdc" stroke-width="0.800"/>
<rect x="870.4" y="98" width="1" height="32" fill="#3b3b3b"/>
<path d="M896.500 106.300 l3 -1.200 v11 l-3 1z" fill="#8ad654" stroke="#46a018" stroke-width="0.600"/>
<rect x="877.300" y="105.400" width="19.400" height="11.600" fill="#86d64c" stroke="#46a018" stroke-width="0.800"/>
<rect x="878.800" y="106.900" width="16.400" height="8.600" fill="none" stroke="#b6ec8c" stroke-width="0.800"/>
<ellipse cx="887" cy="110.500" rx="2.800" ry="3.200" fill="#3f9a14"/><rect x="880.400" y="109.700" width="1.500" height="1.500" fill="#3f9a14"/><rect x="892" y="109.700" width="1.500" height="1.500" fill="#3f9a14"/>
<ellipse cx="891.900" cy="118" rx="4.300" ry="2.700" transform="rotate(40 891.900 118)" fill="#f7dc6a" stroke="#b98a14" stroke-width="0.800"/>
<path d="M878.400 113.800 v6.800 a4.800 2 0 0 0 9.600 0 v-6.800z" fill="url(#ggold)" stroke="#b98a14" stroke-width="0.600"/>
<ellipse cx="883.200" cy="113.800" rx="4.800" ry="2" fill="#fbe88a" stroke="#c99a1c" stroke-width="0.600"/>
<path d="M907.90 114.10 h7.400 l-3.700 4.300z" fill="#ececec"/>
<text x="925.700" y="121.300" font-family="Liberation Sans,sans-serif" font-size="19.500" fill="#4c4c4c" stroke="#4c4c4c" stroke-width="0.500" textLength="18.500" lengthAdjust="spacingAndGlyphs">%</text>
<text x="956.600" y="120.600" font-family="Liberation Sans,sans-serif" font-size="18.500" fill="#4c4c4c" stroke="#4c4c4c" stroke-width="0.500" textLength="23" lengthAdjust="spacingAndGlyphs">7.4</text>
<path d="M991.700 106.800 h3.500 v1.700 h2.500 v-1.700 h6.600 v1.700 h2.500 v-1.700 h3.700 v15.400 h-18.800z" fill="none" stroke="#474747" stroke-width="1.100"/>
<path d="M992.200 109.600 h18" stroke="#474747" stroke-width="2"/>
<circle cx="996.600" cy="113.600" r="0.800" fill="#555"/><circle cx="1000.600" cy="113.600" r="0.800" fill="#555"/><circle cx="1004.600" cy="113.600" r="0.800" fill="#555"/><circle cx="1004.600" cy="117.600" r="0.800" fill="#555"/>
<rect x="1021.4" y="98" width="1" height="32" fill="#3b3b3b"/>
<ellipse cx="1034.8" cy="112.300" rx="4" ry="7" fill="none" stroke="#454545" stroke-width="1"/>
<ellipse cx="1047.3" cy="112.300" rx="4" ry="7" fill="none" stroke="#454545" stroke-width="1"/>
<rect x="1040.0" y="118" width="2" height="2" fill="#666"/>
<path d="M1046.90 115.50 h3.40 v3.30 h3.30 v3.40 h-3.30 v3.30 h-3.40 v-3.30 h-3.30 v-3.40 h3.30 z" fill="url(#gplus)" stroke="#3f8f14" stroke-width="0.9" stroke-linejoin="round"/>
<ellipse cx="1067.8" cy="112.300" rx="4" ry="7" fill="none" stroke="#454545" stroke-width="1"/>
<ellipse cx="1080.3" cy="112.300" rx="4" ry="7" fill="none" stroke="#454545" stroke-width="1"/>
<rect x="1073.0" y="118" width="2" height="2" fill="#666"/>
<path d="M1077.300 116.600 l8.400 8.400 M1085.700 116.600 l-8.400 8.400" stroke="#b81e3a" stroke-width="3.600"/><path d="M1077.600 116.900 l7.800 7.800 M1085.400 116.900 l-7.800 7.800" stroke="#e8405c" stroke-width="2"/>
<rect x="1095.4" y="98" width="1" height="32" fill="#3b3b3b"/>
<path d="M1108.0 106.400 h8 M1108.0 119.500 h8 M1108.0 122.400 h8 M1118.0 106.400 h9 M1118.0 119.500 h9 M1118.0 122.400 h3 M1118.0 103.300 h2 M1118.0 125.500 h2" stroke="#454545" stroke-width="0.900"/>
<rect x="1118.0" y="109.0" width="10.0" height="3" rx="1.2" fill="#161616"/>
<rect x="1119.0" y="110.0" width="8.0" height="1" fill="#a6a6a6"/>
<rect x="1118.0" y="114.1" width="8.0" height="3" rx="1.2" fill="#161616"/>
<rect x="1119.0" y="115.1" width="6.0" height="1" fill="#a6a6a6"/>
<path d="M1105.3 111.300 h5.400 v-3 l6.300 5.200 l-6.300 5.200 v-3 h-5.400z" fill="url(#gora)" stroke="#dc6a1c" stroke-width="0.700" stroke-linejoin="round"/>
<path d="M1140.8 106.400 h8 M1140.8 119.500 h8 M1140.8 122.400 h8 M1150.8 106.400 h9 M1150.8 119.500 h9 M1150.8 122.400 h3 M1150.8 103.300 h2 M1150.8 125.500 h2" stroke="#454545" stroke-width="0.900"/>
<rect x="1150.8" y="109.0" width="10.0" height="3" rx="1.2" fill="#161616"/>
<rect x="1151.8" y="110.0" width="8.0" height="1" fill="#a6a6a6"/>
<rect x="1150.8" y="114.1" width="8.0" height="3" rx="1.2" fill="#161616"/>
<rect x="1151.8" y="115.1" width="6.0" height="1" fill="#a6a6a6"/>
<path d="M1149.5 111.300 h-5.400 v-3 l-6.300 5.200 l6.300 5.200 v-3 h5.400z" fill="url(#gora)" stroke="#dc6a1c" stroke-width="0.700" stroke-linejoin="round"/>
<rect x="1169.4" y="98" width="1" height="32" fill="#3b3b3b"/>
<rect x="1178.250" y="105.150" width="18.600" height="16.700" fill="none" stroke="#f07a32" stroke-width="2.500"/>
<rect x="1177.300" y="104.200" width="20.500" height="18.600" fill="none" stroke="#f9a25e" stroke-width="0.600"/>
<path d="M1187.500 106.400 v14.200 M1179.500 113.500 h16" stroke="#c4c4c4" stroke-width="1"/>
<path d="M1206.80 114.10 h7.400 l-3.700 4.300z" fill="#ececec"/>
<g transform="rotate(-42.500 1232 110.400)"><rect x="1224.500" y="108" width="13.500" height="4.800" fill="#f5b52c" stroke="#d98e10" stroke-width="0.500"/><rect x="1224.500" y="109.600" width="13.500" height="1.400" fill="#fbd060"/><rect x="1238" y="108" width="1.500" height="4.800" fill="#c8c8c8"/><path d="M1239.500 108 h2.800 a1.200 1.200 0 0 1 1.200 1.200 v2.400 a1.200 1.200 0 0 1 -1.200 1.200 h-2.800z" fill="#f0609c"/><path d="M1224.500 108 l-4 2.400 l4 2.400z" fill="#f7e2b8"/><path d="M1221.900 109.500 l-1.600 0.900 l1.600 0.900z" fill="#111"/></g>
<path d="M1223.300 119.500 c3 2 6 1.500 9 -0.300 c2.500 -1.300 5 -1 7.500 0.500" fill="none" stroke="#151515" stroke-width="1.500"/>
<path d="M1223.300 122.300 c3 2 6 1.500 9 -0.200 c2.500 -1.200 5 -0.800 7.500 0.600" fill="none" stroke="#1a1a1a" stroke-width="1.200"/>
<path d="M1223.300 125.200 h17" stroke="#1c1c1c" stroke-width="1.200" stroke-dasharray="2 1"/>
<path d="M1250.70 114.10 h7.400 l-3.700 4.300z" fill="#ececec"/>
<rect x="1268.100" y="104.800" width="16.200" height="12.300" fill="none" stroke="#3f8ef2" stroke-width="3"/>
<rect x="1268.600" y="105.300" width="15.200" height="11.300" fill="none" stroke="#9cd0ff" stroke-width="1"/>
<rect x="1263.900" y="120.200" width="24.300" height="5.800" fill="#2f66a3"/>
<path d="M1294.70 114.10 h7.400 l-3.700 4.300z" fill="#ececec"/>
<rect x="1309.5" y="98" width="1" height="32" fill="#3b3b3b"/>
<rect x="1318" y="103.900" width="20.200" height="20.300" fill="#e8e6e0" stroke="#f8f8f6" stroke-width="0.700"/>
<rect x="1320.200" y="106.300" width="15.600" height="3.300" rx="1" fill="#6cc62c" stroke="#4aa018" stroke-width="0.500"/>
<rect x="1320.200" y="112.300" width="6.800" height="3.300" rx="1" fill="#f9c33c" stroke="#e0a018" stroke-width="0.500"/>
<rect x="1320.200" y="118.300" width="11.600" height="3.300" rx="1" fill="#e23a48" stroke="#c01e30" stroke-width="0.500"/>
<path d="M1346.90 114.10 h7.400 l-3.700 4.300z" fill="#ececec"/>
<rect x="1361.6" y="98" width="1" height="32" fill="#3b3b3b"/>
<rect x="1365.500" y="97.400" width="31.800" height="34" rx="4" fill="#1e1e1e"/>
<path d="M1387.2 106.200 h-6.300 a4.400 4.400 0 0 0 0 8.800 h1.300 v7.200 h1.300 v-14.800 h1.900 v14.800 h1.300 v-14.800 h0.500z" fill="#7c7c7c"/>
<path d="M1370.300 117.600 h5.200 v-2.800 l6 4.700 l-6 4.700 v-2.800 h-5.200z" fill="url(#gora)" stroke="#dc6a1c" stroke-width="0.700" stroke-linejoin="round"/>
<path d="M1416.2 106.200 h-6.300 a4.400 4.400 0 0 0 0 8.800 h1.300 v7.200 h1.300 v-14.800 h1.900 v14.800 h1.300 v-14.800 h0.500z" fill="#6a6a6a"/>
<path d="M1427 117.600 h-5.200 v-2.800 l-6 4.700 l6 4.700 v-2.800 h5.200z" fill="url(#gora)" stroke="#dc6a1c" stroke-width="0.700" stroke-linejoin="round"/>
<rect x="1435.5" y="98" width="1" height="32" fill="#3b3b3b"/>
<rect x="1439.600" y="97.400" width="31.800" height="34" rx="4" fill="#1e1e1e"/>
<path d="M1448.200 113 l3.300 -7 l3.300 7 M1449.400 110.600 h4.200" fill="none" stroke="#6e6e6e" stroke-width="0.900"/>
<path d="M1457.800 106.500 h4 M1457.800 109.800 h4 M1457.800 113 h4 M1446.800 116.500 h14.600 M1446.800 119.500 h14.600 M1446.800 122.500 h14.600" stroke="#6e6e6e" stroke-width="0.900"/>
<path d="M1462.200 107.200 l2.800 2.500 l-2.800 2.500z M1462.200 117 l2.800 2.500 l-2.800 2.500z" fill="#6e6e6e"/>
<path d="M1480.800 113 l3.600 -7.200 l3.600 7.200 M1482 110.600 h4.800" fill="none" stroke="#474747" stroke-width="0.900"/>
<path d="M1482 114.500 v5.500 M1484.400 114.500 v5.500 M1486.800 114.500 v5.500" stroke="#474747" stroke-width="0.900" stroke-dasharray="1 0.800"/>
<path d="M1481 120.200 h6.800 l-3.400 2.600z" fill="#474747"/>
<path d="M1491.500 105 v15.500 M1494.300 105 v15.500 M1497.100 105 v15.500" stroke="#474747" stroke-width="0.900"/>
<path d="M1490.600 120.200 h7.400 l-3.700 2.800z" fill="#474747"/>
</svg>
<div class="abs combo" style="left:1px;top:97.500px;width:185.500px;height:33px"><div class="btn" style="width:35px"></div><div class="abs arrb" style="left:162.200px;top:14px"></div></div>
<div class="abs combo" style="left:195px;top:97.500px;width:94.500px;height:33px"><div class="btn" style="width:35px"></div><div class="abs arrb" style="left:71.200px;top:14px"></div></div>
<div class="abs ut" style="left:9.91px;top:103.28px;font-size:14.20px;color:#e4e4e4;transform:scaleX(0.9786);">Liberation Sans</div><div class="abs ut" style="left:203.72px;top:103.28px;font-size:14.20px;color:#e4e4e4;transform:scaleX(0.9769);">10 pt</div>
<div class="abs combo" style="left:1px;top:137px;width:146px;height:33px"><div class="btn" style="width:35px"></div><div class="abs arrb" style="left:121.600px;top:13.600px"></div></div>
<div class="abs ut" style="left:10.05px;top:142.08px;font-size:14.20px;color:#e4e4e4;transform:scaleX(0.8659);">H1</div>
<div class="abs sep" style="left:151px;top:140px;height:25px"></div>
<svg class="abs" style="left:155px;top:140px" width="85" height="24" viewBox="155 140 85 24"><path d="M166.800 146 c-2.400 -1.200 -4.100 -0.300 -4.100 2.200 V157 M160.300 149.800 h5.600" fill="none" stroke="#5c5c5c" stroke-width="1.700"/><path d="M168.800 152 l6.400 6.400 M175.200 152 l-6.400 6.400" stroke="#5c5c5c" stroke-width="1.300"/><path d="M195.200 148.200 v-1.700 h-8.200 l4.800 5.600 l-4.800 5.700 h8.300 v-1.800" fill="none" stroke="#5c5c5c" stroke-width="1.300"/><path d="M205.900 152 h7.600 l-3.800 4.300z" fill="#f0f0f0"/><rect x="223.400" y="147.800" width="11" height="3" rx="1" fill="#232323"/><rect x="223.400" y="153" width="11" height="3" rx="1" fill="#232323"/><rect x="224.200" y="148.700" width="9.400" height="1.300" fill="#636363"/><rect x="224.200" y="153.900" width="9.400" height="1.300" fill="#636363"/></svg>
<div class="abs" style="left:241px;top:142px;width:1646px;height:22px;background:#262626;border:1px solid #232323"></div>
<div class="abs ut" style="left:247.81px;top:142.08px;font-size:14.20px;color:#e4e4e4;transform:scaleX(0.9868);">type</div>
<div class="abs arrb" style="left:1891.300px;top:151px"></div>
<div id="grid" class="abs">
<div class="abs hdr" style="left:0;top:0;width:1895px;height:18px"></div>
<div class="abs hdr" style="left:0;top:18px;width:34px;height:800px"></div>
<div class="abs ch" style="left:34.4px;width:52px"><span>A</span></div>
<div class="abs hvl" style="left:33px"></div>
<div class="abs ch" style="left:87.4px;width:400px"><span>B</span></div>
<div class="abs hvl" style="left:86px"></div>
<div class="abs ch" style="left:488.4px;width:681px"><span>C</span></div>
<div class="abs hvl" style="left:487px"></div>
<div class="abs ch" style="left:1170.4px;width:78px"><span>D</span></div>
<div class="abs hvl" style="left:1169px"></div>
<div class="abs ch" style="left:1249.4px;width:62px"><span>E</span></div>
<div class="abs hvl" style="left:1248px"></div>
<div class="abs ch" style="left:1312.4px;width:60px"><span>F</span></div>
<div class="abs hvl" style="left:1311px"></div>
<div class="abs ch" style="left:1373.4px;width:63px"><span>G</span></div>
<div class="abs hvl" style="left:1372px"></div>
<div class="abs ch" style="left:1437.4px;width:67px"><span>H</span></div>
<div class="abs hvl" style="left:1436px"></div>
<div class="abs ch" style="left:1505.4px;width:78px"><span>I</span></div>
<div class="abs hvl" style="left:1504px"></div>
<div class="abs ch" style="left:1584.4px;width:84px"><span>J</span></div>
<div class="abs hvl" style="left:1583px"></div>
<div class="abs ch" style="left:1669.4px;width:67px"><span>K</span></div>
<div class="abs hvl" style="left:1668px"></div>
<div class="abs ch" style="left:1737.4px;width:70px"><span>L</span></div>
<div class="abs hvl" style="left:1736px"></div>
<div class="abs ch" style="left:1808.4px;width:134px"><span>M</span></div>
<div class="abs hvl" style="left:1807px"></div>
<div class="abs rh" style="top:18px"><span>1</span></div>
<div class="abs rh" style="top:35px"><span>2</span></div>
<div class="abs rh" style="top:52px"><span>3</span></div>
<div class="abs rh" style="top:69px"><span>4</span></div>
<div class="abs rh" style="top:86px"><span>5</span></div>
<div class="abs rh" style="top:103px"><span>6</span></div>
<div class="abs rh" style="top:120px"><span>7</span></div>
<div class="abs rh" style="top:137px"><span>8</span></div>
<div class="abs rh" style="top:154px"><span>9</span></div>
<div class="abs rh" style="top:171px"><span>10</span></div>
<div class="abs rh" style="top:188px"><span>11</span></div>
<div class="abs rh" style="top:205px"><span>12</span></div>
<div class="abs rh" style="top:222px"><span>13</span></div>
<div class="abs rh" style="top:239px"><span>14</span></div>
<div class="abs rh" style="top:256px"><span>15</span></div>
<div class="abs rh" style="top:273px"><span>16</span></div>
<div class="abs rh" style="top:290px"><span>17</span></div>
<div class="abs rh" style="top:307px"><span>18</span></div>
<div class="abs rh" style="top:324px"><span>19</span></div>
<div class="abs rh" style="top:341px"><span>20</span></div>
<div class="abs rh" style="top:358px"><span>21</span></div>
<div class="abs rh" style="top:375px"><span>22</span></div>
<div class="abs rh" style="top:392px"><span>23</span></div>
<div class="abs rh" style="top:409px"><span>24</span></div>
<div class="abs rh" style="top:426px"><span>25</span></div>
<div class="abs rh" style="top:443px"><span>26</span></div>
<div class="abs rh" style="top:460px"><span>27</span></div>
<div class="abs rh" style="top:477px"><span>28</span></div>
<div class="abs rh" style="top:494px"><span>29</span></div>
<div class="abs rh" style="top:511px"><span>30</span></div>
<div class="abs rh" style="top:528px"><span>31</span></div>
<div class="abs rh" style="top:545px"><span>32</span></div>
<div class="abs rh" style="top:562px"><span>33</span></div>
<div class="abs rh" style="top:579px"><span>34</span></div>
<div class="abs rh" style="top:596px"><span>35</span></div>
<div class="abs rh" style="top:613px"><span>36</span></div>
<div class="abs rh" style="top:630px"><span>37</span></div>
<div class="abs rh" style="top:647px"><span>38</span></div>
<div class="abs rh" style="top:664px"><span>39</span></div>
<div class="abs rh" style="top:681px"><span>40</span></div>
<div class="abs rh" style="top:698px"><span>41</span></div>
<div class="abs rh" style="top:715px"><span>42</span></div>
<div class="abs rh" style="top:732px"><span>43</span></div>
<div class="abs rh" style="top:749px"><span>44</span></div>
<div class="abs rh" style="top:766px"><span>45</span></div>
<div class="abs rh" style="top:783px"><span>46</span></div>
<div class="abs rh" style="top:800px"><span>47</span></div>
<svg class="abs" style="left:0;top:0" width="1895" height="810" viewBox="0 0 1895 810" shape-rendering="crispEdges" text-rendering="geometricPrecision"><path d="M86.5 18V810M487.5 18V810M1169.5 18V810M1248.5 18V810M1311.5 18V810M1372.5 18V810M1436.5 18V810M1504.5 18V810M1583.5 18V810M1668.5 18V810M1736.5 18V810M1807.5 18V810M34 34.5H1895M34 51.5H1895M34 68.5H1895M34 85.5H1895M34 102.5H1895M34 119.5H1895M34 136.5H1895M34 153.5H1895M34 170.5H1895M34 187.5H1895M34 204.5H1895M34 221.5H1895M34 238.5H1895M34 255.5H1895M34 272.5H1895M34 289.5H1895M34 306.5H1895M34 323.5H1895M34 340.5H1895M34 357.5H1895M34 374.5H1895M34 391.5H1895M34 408.5H1895M34 425.5H1895M34 442.5H1895M34 459.5H1895M34 476.5H1895M34 493.5H1895M34 510.5H1895M34 527.5H1895M34 544.5H1895M34 561.5H1895M34 578.5H1895M34 595.5H1895M34 612.5H1895M34 629.5H1895M34 646.5H1895M34 663.5H1895M34 680.5H1895M34 697.5H1895M34 714.5H1895M34 731.5H1895M34 748.5H1895M34 765.5H1895M34 782.5H1895M34 799.5H1895M34 816.5H1895" stroke="#c3c3c3" stroke-width="1" fill="none"/>
<path d="M0 34.5H34M0 51.5H34M0 68.5H34M0 85.5H34M0 102.5H34M0 119.5H34M0 136.5H34M0 153.5H34M0 170.5H34M0 187.5H34M0 204.5H34M0 221.5H34M0 238.5H34M0 255.5H34M0 272.5H34M0 289.5H34M0 306.5H34M0 323.5H34M0 340.5H34M0 357.5H34M0 374.5H34M0 391.5H34M0 408.5H34M0 425.5H34M0 442.5H34M0 459.5H34M0 476.5H34M0 493.5H34M0 510.5H34M0 527.5H34M0 544.5H34M0 561.5H34M0 578.5H34M0 595.5H34M0 612.5H34M0 629.5H34M0 646.5H34M0 663.5H34M0 680.5H34M0 697.5H34M0 714.5H34M0 731.5H34M0 748.5H34M0 765.5H34M0 782.5H34M0 799.5H34M0 816.5H34M0 17.5H33" stroke="#ababab" stroke-width="1" fill="none"/>
<g font-family="Liberation Sans,sans-serif" font-size="13" fill="#000">
<text x="35 38" y="31">id</text>
<text x="88 95 102 113" y="31">name</text>
<text x="489 496 503 507 510 517 524 527 534 541 548 555 566" y="31">variable_name</text>
<text x="1171 1178 1185 1192 1196 1200 1207 1214 1221 1232" y="31">short_name</text>
<text x="1250 1253 1260 1267 1274 1281 1285 1288 1295" y="31">is_active</text>
<text x="1313 1317 1324 1335 1342 1345 1352 1356" y="31">template</text>
<text x="1374 1381 1388 1395 1399 1406 1413 1417 1420" y="31">synthetic</text>
<text x="1438 1442 1449 1456" y="31">type</text>
<text x="1506 1515 1518 1525 1532 1539 1543 1550 1557 1560 1567" y="31">widget_size</text>
<text x="1585 1596 1603 1610 1617 1620 1627 1634 1641 1652" y="31">model_name</text>
<text x="1670 1681 1688 1699 1703 1710 1714 1721 1728" y="31">mgmt_type</text>
<text x="1738 1745 1752 1759 1766 1777 1784 1788 1795" y="31">ephemeral</text>
<text x="1809 1820 1827 1834 1841 1848 1855 1862 1865 1872 1879 1886 1893" y="31">mask_value_on</text>
<text x="43 50 57 64 71 78" y="48">316158</text>
<text x="88 97 104 111 114 121" y="48">Device</text>
<text x="489 498 505 512 515 522 529" y="48">Device.</text>
<text x="1303" y="48">1</text>
<text x="1364" y="48">1</text>
<text x="1428" y="48">0</text>
<text x="1438 1445 1449 1453 1456 1463" y="48">string</text>
<text x="1799" y="48">0</text>
<text x="43 50 57 64 71 78" y="65">316159</text>
<text x="88 92 99 103 110 114 118 125 132 139 148 152 159 166 173 182 189 200 207 214 218 228 232 241 248 252 256 259 266" y="65">InterfaceStackNumberOfEntries</text>
<text x="489 498 505 512 515 522 529 533 537 544 548 555 559 563 570 577 584 593 597 604 611 618 627 634 645 652 659 663 673 677 686 693 697 701 704 711" y="65">Device.InterfaceStackNumberOfEntries</text>
<text x="1303" y="65">1</text>
<text x="1364" y="65">1</text>
<text x="1428" y="65">0</text>
<text x="1438 1445 1452 1459 1462 1466 1469 1476" y="65">positive</text>
<text x="1670 1677 1684 1691 1694 1698 1701 1708" y="65">positive</text>
<text x="1799" y="65">0</text>
<text x="43 50 57 64 71 78" y="82">316160</text>
<text x="88 97 101 104 111 118 121 128" y="82">Bridging</text>
<text x="489 498 505 512 515 522 529 533 542 546 549 556 563 566 573 580" y="82">Device.Bridging.</text>
<text x="1303" y="82">1</text>
<text x="1364" y="82">1</text>
<text x="1428" y="82">0</text>
<text x="1438 1445 1449 1453 1456 1463" y="82">string</text>
<text x="1799" y="82">0</text>
<text x="43 50 57 64 71 78" y="99">316161</text>
<text x="88 97 101 104 111 118 121 128 135 139 150 157 164 173 177 180 187 194 201 210 217 221 225 228 235" y="99">Bridging.MaxBridgeEntries</text>
<text x="489 498 505 512 515 522 529 533 542 546 549 556 563 566 573 580 584 595 602 609 618 622 625 632 639 646 655 662 666 670 673 680" y="99">Device.Bridging.MaxBridgeEntries</text>
<text x="1303" y="99">1</text>
<text x="1364" y="99">1</text>
<text x="1428" y="99">0</text>
<text x="1438 1445 1452 1459 1462 1466 1469 1476" y="99">positive</text>
<text x="1670 1677 1684 1691 1694 1698 1701 1708" y="99">positive</text>
<text x="1799" y="99">0</text>
<text x="43 50 57 64 71 78" y="116">316162</text>
<text x="88 97 101 104 111 118 121 128 135 139 150 157 164 173 182 186 189 196 203 210 219 226 230 234 237 244" y="116">Bridging.MaxDBridgeEntries</text>
<text x="489 498 505 512 515 522 529 533 542 546 549 556 563 566 573 580 584 595 602 609 618 627 631 634 641 648 655 664 671 675 679 682 689" y="116">Device.Bridging.MaxDBridgeEntries</text>
<text x="1303" y="116">1</text>
<text x="1364" y="116">1</text>
<text x="1428" y="116">0</text>
<text x="1438 1445 1452 1459 1462 1466 1469 1476" y="116">positive</text>
<text x="1670 1677 1684 1691 1694 1698 1701 1708" y="116">positive</text>
<text x="1799" y="116">0</text>
<text x="43 50 57 64 71 78" y="133">316163</text>
<text x="88 97 101 104 111 118 121 128 135 139 150 157 164 174 183 187 190 197 204 211 220 227 231 235 238 245" y="133">Bridging.MaxQBridgeEntries</text>
<text x="489 498 505 512 515 522 529 533 542 546 549 556 563 566 573 580 584 595 602 609 619 628 632 635 642 649 656 665 672 676 680 683 690" y="133">Device.Bridging.MaxQBridgeEntries</text>
<text x="1303" y="133">1</text>
<text x="1364" y="133">1</text>
<text x="1428" y="133">0</text>
<text x="1438 1445 1452 1459 1462 1466 1469 1476" y="133">positive</text>
<text x="1670 1677 1684 1691 1694 1698 1701 1708" y="133">positive</text>
<text x="1799" y="133">0</text>
<text x="43 50 57 64 71 78" y="150">316164</text>
<text x="88 97 101 104 111 118 121 128 135 139 150 157 164 173 180 189 198 207 214 218 222 225 232" y="150">Bridging.MaxVLANEntries</text>
<text x="489 498 505 512 515 522 529 533 542 546 549 556 563 566 573 580 584 595 602 609 618 625 634 643 652 659 663 667 670 677" y="150">Device.Bridging.MaxVLANEntries</text>
<text x="1303" y="150">1</text>
<text x="1364" y="150">1</text>
<text x="1428" y="150">0</text>
<text x="1438 1445 1452 1459 1462 1466 1469 1476" y="150">positive</text>
<text x="1670 1677 1684 1691 1694 1698 1701 1708" y="150">positive</text>
<text x="1799" y="150">0</text>
<text x="43 50 57 64 71 78" y="167">316165</text>
<text x="88 97 101 104 111 118 121 128 135 139 150 157 164 172 175 178 182 189 193 202 209 213 217 220 227" y="167">Bridging.MaxFilterEntries</text>
<text x="489 498 505 512 515 522 529 533 542 546 549 556 563 566 573 580 584 595 602 609 617 620 623 627 634 638 647 654 658 662 665 672" y="167">Device.Bridging.MaxFilterEntries</text>
<text x="1303" y="167">1</text>
<text x="1364" y="167">1</text>
<text x="1428" y="167">0</text>
<text x="1438 1445 1452 1459 1462 1466 1469 1476" y="167">positive</text>
<text x="1670 1677 1684 1691 1694 1698 1701 1708" y="167">positive</text>
<text x="1799" y="167">0</text>
<text x="43 50 57 64 71 78" y="184">316166</text>
<text x="88 97 101 104 111 118 121 128 135 139 148 152 155 162 169 176 185 192 203 210 217 221 231 235 244 251 255 259 262 269" y="184">Bridging.BridgeNumberOfEntries</text>
<text x="489 498 505 512 515 522 529 533 542 546 549 556 563 566 573 580 584 593 597 600 607 614 621 630 637 648 655 662 666 676 680 689 696 700 704 707 714" y="184">Device.Bridging.BridgeNumberOfEntries</text>
<text x="1303" y="184">1</text>
<text x="1364" y="184">1</text>
<text x="1428" y="184">0</text>
<text x="1438 1445 1452 1459 1462 1466 1469 1476" y="184">positive</text>
<text x="1670 1677 1684 1691 1694 1698 1701 1708" y="184">positive</text>
<text x="1799" y="184">0</text>
<text x="43 50 57 64 71 78" y="201">316167</text>
<text x="88 97 101 104 111 118 121 128 135 139 147 150 153 157 164 168 177 184 195 202 209 213 223 227 236 243 247 251 254 261" y="201">Bridging.FilterNumberOfEntries</text>
<text x="489 498 505 512 515 522 529 533 542 546 549 556 563 566 573 580 584 592 595 598 602 609 613 622 629 640 647 654 658 668 672 681 688 692 696 699 706" y="201">Device.Bridging.FilterNumberOfEntries</text>
<text x="1303" y="201">1</text>
<text x="1364" y="201">1</text>
<text x="1428" y="201">0</text>
<text x="1438 1445 1452 1459 1462 1466 1469 1476" y="201">positive</text>
<text x="1670 1677 1684 1691 1694 1698 1701 1708" y="201">positive</text>
<text x="1799" y="201">0</text>
<text x="43 50 57 64 71 78" y="218">316168</text>
<text x="88 97 101 104 111 118 121 128 135 139 148 152 155 162 169" y="218">Bridging.Bridge</text>
<text x="489 498 505 512 515 522 529 533 542 546 549 556 563 566 573 580 584 593 597 600 607 614 621" y="218">Device.Bridging.Bridge.</text>
<text x="1303" y="218">1</text>
<text x="1364" y="218">1</text>
<text x="1428" y="218">0</text>
<text x="1438 1445 1449 1453 1456 1463" y="218">string</text>
<text x="1799" y="218">0</text>
<text x="43 50 57 64 71 78" y="235">316169</text>
<text x="88 97 101 104 111 118 121 128 135 139 148 152 155 162 169 176 180" y="235">Bridging.Bridge.1</text>
<text x="489 498 505 512 515 522 529 533 542 546 549 556 563 566 573 580 584 593 597 600 607 614 621 625 632" y="235">Device.Bridging.Bridge.1.</text>
<text x="1303" y="235">1</text>
<text x="1364" y="235">1</text>
<text x="1428" y="235">0</text>
<text x="1438 1445 1449 1453 1456 1463" y="235">string</text>
<text x="1799" y="235">0</text>
<text x="43 50 57 64 71 78" y="252">316170</text>
<text x="88 97 101 104 111 118 121 128 135 139 148 152 155 162 169 176 180 187 191 200 207 214 221 224" y="252">Bridging.Bridge.1.Enable</text>
<text x="489 498 505 512 515 522 529 533 542 546 549 556 563 566 573 580 584 593 597 600 607 614 621 625 632 636 645 652 659 666 669" y="252">Device.Bridging.Bridge.1.Enable</text>
<text x="1303" y="252">1</text>
<text x="1364" y="252">1</text>
<text x="1428" y="252">0</text>
<text x="1438 1445 1452 1459 1462 1469 1476" y="252">boolean</text>
<text x="1670 1677 1684 1691 1694 1701 1708" y="252">boolean</text>
<text x="1799" y="252">0</text>
<text x="43 50 57 64 71 78" y="269">316171</text>
<text x="88 97 101 104 111 118 121 128 135 139 148 152 155 162 169 176 180 187 191 200 204 211 215 222" y="269">Bridging.Bridge.1.Status</text>
<text x="489 498 505 512 515 522 529 533 542 546 549 556 563 566 573 580 584 593 597 600 607 614 621 625 632 636 645 649 656 660 667" y="269">Device.Bridging.Bridge.1.Status</text>
<text x="1303" y="269">1</text>
<text x="1364" y="269">1</text>
<text x="1428" y="269">0</text>
<text x="1438 1445 1449 1453 1456 1463" y="269">string</text>
<text x="1799" y="269">0</text>
<text x="43 50 57 64 71 78" y="286">316172</text>
<text x="88 97 101 104 111 118 121 128 135 139 148 152 155 162 169 176 180 187 191 200 203 206 213" y="286">Bridging.Bridge.1.Alias</text>
<text x="489 498 505 512 515 522 529 533 542 546 549 556 563 566 573 580 584 593 597 600 607 614 621 625 632 636 645 648 651 658" y="286">Device.Bridging.Bridge.1.Alias</text>
<text x="1303" y="286">1</text>
<text x="1364" y="286">1</text>
<text x="1428" y="286">0</text>
<text x="1438 1445 1449 1453 1456 1463" y="286">string</text>
<text x="1799" y="286">0</text>
<text x="43 50 57 64 71 78" y="303">316173</text>
<text x="88 97 101 104 111 118 121 128 135 139 148 152 155 162 169 176 180 187 191 200 204 211 218 225 232 236" y="303">Bridging.Bridge.1.Standard</text>
<text x="489 498 505 512 515 522 529 533 542 546 549 556 563 566 573 580 584 593 597 600 607 614 621 625 632 636 645 649 656 663 670 677 681" y="303">Device.Bridging.Bridge.1.Standard</text>
<text x="1303" y="303">1</text>
<text x="1364" y="303">1</text>
<text x="1428" y="303">0</text>
<text x="1438 1445 1449 1453 1456 1463" y="303">string</text>
<text x="1799" y="303">0</text>
<text x="43 50 57 64 71 78" y="320">316174</text>
<text x="88 97 101 104 111 118 121 128 135 139 148 152 155 162 169 176 180 187 191 200 207 211 215 224 231 242 249 256 260 270 274 283 290 294 298 301 308" y="320">Bridging.Bridge.1.PortNumberOfEntries</text>
<text x="489 498 505 512 515 522 529 533 542 546 549 556 563 566 573 580 584 593 597 600 607 614 621 625 632 636 645 652 656 660 669 676 687 694 701 705 715 719 728 735 739 743 746 753" y="320">Device.Bridging.Bridge.1.PortNumberOfEntries</text>
<text x="1303" y="320">1</text>
<text x="1364" y="320">1</text>
<text x="1428" y="320">0</text>
<text x="1438 1445 1452 1459 1462 1466 1469 1476" y="320">positive</text>
<text x="1670 1677 1684 1691 1694 1698 1701 1708" y="320">positive</text>
<text x="1799" y="320">0</text>
<text x="43 50 57 64 71 78" y="337">316175</text>
<text x="88 97 101 104 111 118 121 128 135 139 148 152 155 162 169 176 180 187 191 200 207 216 225 234 241 252 259 266 270 280 284 293 300 304 308 311 318" y="337">Bridging.Bridge.1.VLANNumberOfEntries</text>
<text x="489 498 505 512 515 522 529 533 542 546 549 556 563 566 573 580 584 593 597 600 607 614 621 625 632 636 645 652 661 670 679 686 697 704 711 715 725 729 738 745 749 753 756 763" y="337">Device.Bridging.Bridge.1.VLANNumberOfEntries</text>
<text x="1303" y="337">1</text>
<text x="1364" y="337">1</text>
<text x="1428" y="337">0</text>
<text x="1438 1445 1452 1459 1462 1466 1469 1476" y="337">positive</text>
<text x="1670 1677 1684 1691 1694 1698 1701 1708" y="337">positive</text>
<text x="1799" y="337">0</text>
<text x="43 50 57 64 71 78" y="354">316176</text>
<text x="88 97 101 104 111 118 121 128 135 139 148 152 155 162 169 176 180 187 191 200 207 216 225 234 241 245 249 258 265 276 283 290 294 304 308 317 324 328 332 335 342" y="354">Bridging.Bridge.1.VLANPortNumberOfEntries</text>
<text x="489 498 505 512 515 522 529 533 542 546 549 556 563 566 573 580 584 593 597 600 607 614 621 625 632 636 645 652 661 670 679 686 690 694 703 710 721 728 735 739 749 753 762 769 773 777 780 787" y="354">Device.Bridging.Bridge.1.VLANPortNumberOfEntries</text>
<text x="1303" y="354">1</text>
<text x="1364" y="354">1</text>
<text x="1428" y="354">0</text>
<text x="1438 1445 1452 1459 1462 1466 1469 1476" y="354">positive</text>
<text x="1670 1677 1684 1691 1694 1698 1701 1708" y="354">positive</text>
<text x="1799" y="354">0</text>
<text x="43 50 57 64 71 78" y="371">316177</text>
<text x="88 97 101 104 111 118 121 128 135 139 148 152 155 162 169 176 180 187 191 200 207 211" y="371">Bridging.Bridge.1.Port</text>
<text x="489 498 505 512 515 522 529 533 542 546 549 556 563 566 573 580 584 593 597 600 607 614 621 625 632 636 645 652 656 660" y="371">Device.Bridging.Bridge.1.Port.</text>
<text x="1303" y="371">1</text>
<text x="1364" y="371">1</text>
<text x="1428" y="371">0</text>
<text x="1438 1445 1449 1453 1456 1463" y="371">string</text>
<text x="1799" y="371">0</text>
<text x="43 50 57 64 71 78" y="388">316178</text>
<text x="88 97 101 104 111 118 121 128 135 139 148 152 155 162 169 176 180 187 191 200 207 211 215 219" y="388">Bridging.Bridge.1.Port.1</text>
<text x="489 498 505 512 515 522 529 533 542 546 549 556 563 566 573 580 584 593 597 600 607 614 621 625 632 636 645 652 656 660 664 671" y="388">Device.Bridging.Bridge.1.Port.1.</text>
<text x="1303" y="388">1</text>
<text x="1364" y="388">1</text>
<text x="1428" y="388">0</text>
<text x="1438 1445 1449 1453 1456 1463" y="388">string</text>
<text x="1799" y="388">0</text>
<text x="43 50 57 64 71 78" y="405">316179</text>
<text x="88 97 101 104 111 118 121 128 135 139 148 152 155 162 169 176 180 187 191 200 207 211 215 219 226 230 239 246 253 260 263" y="405">Bridging.Bridge.1.Port.1.Enable</text>
<text x="489 498 505 512 515 522 529 533 542 546 549 556 563 566 573 580 584 593 597 600 607 614 621 625 632 636 645 652 656 660 664 671 675 684 691 698 705 708" y="405">Device.Bridging.Bridge.1.Port.1.Enable</text>
<text x="1303" y="405">1</text>
<text x="1364" y="405">1</text>
<text x="1428" y="405">0</text>
<text x="1438 1445 1452 1459 1462 1469 1476" y="405">boolean</text>
<text x="1670 1677 1684 1691 1694 1701 1708" y="405">boolean</text>
<text x="1799" y="405">0</text>
<text x="43 50 57 64 71 78" y="422">316180</text>
<text x="88 97 101 104 111 118 121 128 135 139 148 152 155 162 169 176 180 187 191 200 207 211 215 219 226 230 239 243 250 254 261" y="422">Bridging.Bridge.1.Port.1.Status</text>
<text x="489 498 505 512 515 522 529 533 542 546 549 556 563 566 573 580 584 593 597 600 607 614 621 625 632 636 645 652 656 660 664 671 675 684 688 695 699 706" y="422">Device.Bridging.Bridge.1.Port.1.Status</text>
<text x="1303" y="422">1</text>
<text x="1364" y="422">1</text>
<text x="1428" y="422">0</text>
<text x="1438 1445 1449 1453 1456 1463" y="422">string</text>
<text x="1799" y="422">0</text>
<text x="43 50 57 64 71 78" y="439">316181</text>
<text x="88 97 101 104 111 118 121 128 135 139 148 152 155 162 169 176 180 187 191 200 207 211 215 219 226 230 239 242 245 252" y="439">Bridging.Bridge.1.Port.1.Alias</text>
<text x="489 498 505 512 515 522 529 533 542 546 549 556 563 566 573 580 584 593 597 600 607 614 621 625 632 636 645 652 656 660 664 671 675 684 687 690 697" y="439">Device.Bridging.Bridge.1.Port.1.Alias</text>
<text x="1303" y="439">1</text>
<text x="1364" y="439">1</text>
<text x="1428" y="439">0</text>
<text x="1438 1445 1449 1453 1456 1463" y="439">string</text>
<text x="1799" y="439">0</text>
<text x="43 50 57 64 71 78" y="456">316182</text>
<text x="88 97 101 104 111 118 121 128 135 139 148 152 155 162 169 176 180 187 191 200 207 211 215 219 226 230 239 246 257" y="456">Bridging.Bridge.1.Port.1.Name</text>
<text x="489 498 505 512 515 522 529 533 542 546 549 556 563 566 573 580 584 593 597 600 607 614 621 625 632 636 645 652 656 660 664 671 675 684 691 702" y="456">Device.Bridging.Bridge.1.Port.1.Name</text>
<text x="1303" y="456">1</text>
<text x="1364" y="456">1</text>
<text x="1428" y="456">0</text>
<text x="1438 1445 1449 1453 1456 1463" y="456">string</text>
<text x="1799" y="456">0</text>
<text x="43 50 57 64 71 78" y="473">316183</text>
<text x="88 97 101 104 111 118 121 128 135 139 148 152 155 162 169 176 180 187 191 200 207 211 215 219 226 230 237 244 251 255 264 271 278 285 292" y="473">Bridging.Bridge.1.Port.1.LastChange</text>
<text x="489 498 505 512 515 522 529 533 542 546 549 556 563 566 573 580 584 593 597 600 607 614 621 625 632 636 645 652 656 660 664 671 675 682 689 696 700 709 716 723 730 737" y="473">Device.Bridging.Bridge.1.Port.1.LastChange</text>
<text x="1303" y="473">1</text>
<text x="1364" y="473">1</text>
<text x="1428" y="473">0</text>
<text x="1438 1445 1452 1459 1462 1466 1469 1476" y="473">positive</text>
<text x="1670 1677 1684 1691 1694 1698 1701 1708" y="473">positive</text>
<text x="1799" y="473">0</text>
<text x="43 50 57 64 71 78" y="490">316184</text>
<text x="88 97 101 104 111 118 121 128 135 139 148 152 155 162 169 176 180 187 191 200 207 211 215 219 226 230 237 244 253 260 264 271 278 285 292 296" y="490">Bridging.Bridge.1.Port.1.LowerLayers</text>
<text x="489 498 505 512 515 522 529 533 542 546 549 556 563 566 573 580 584 593 597 600 607 614 621 625 632 636 645 652 656 660 664 671 675 682 689 698 705 709 716 723 730 737 741" y="490">Device.Bridging.Bridge.1.Port.1.LowerLayers</text>
<text x="1303" y="490">1</text>
<text x="1364" y="490">1</text>
<text x="1428" y="490">0</text>
<text x="1438 1445 1449 1453 1456 1463" y="490">string</text>
<text x="1799" y="490">0</text>
<text x="43 50 57 64 71 78" y="507">316185</text>
<text x="88 97 101 104 111 118 121 128 135 139 148 152 155 162 169 176 180 187 191 200 207 211 215 219 226 230 241 248 255 262 269 276 287 294 301 305 314 321 325" y="507">Bridging.Bridge.1.Port.1.ManagementPort</text>
<text x="489 498 505 512 515 522 529 533 542 546 549 556 563 566 573 580 584 593 597 600 607 614 621 625 632 636 645 652 656 660 664 671 675 686 693 700 707 714 721 732 739 746 750 759 766 770" y="507">Device.Bridging.Bridge.1.Port.1.ManagementPort</text>
<text x="1303" y="507">1</text>
<text x="1364" y="507">1</text>
<text x="1428" y="507">0</text>
<text x="1438 1445 1452 1459 1462 1469 1476" y="507">boolean</text>
<text x="1670 1677 1684 1691 1694 1701 1708" y="507">boolean</text>
<text x="1799" y="507">0</text>
<text x="43 50 57 64 71 78" y="524">316186</text>
<text x="88 97 101 104 111 118 121 128 135 139 148 152 155 162 169 176 180 187 191 200 207 211 215 219 226 230 239 246 250 257 264 267 271 280 287 294 298 307 311 314 321 325 328 332" y="524">Bridging.Bridge.1.Port.1.DefaultUserPriority</text>
<text x="489 498 505 512 515 522 529 533 542 546 549 556 563 566 573 580 584 593 597 600 607 614 621 625 632 636 645 652 656 660 664 671 675 684 691 695 702 709 712 716 725 732 739 743 752 756 759 766 770 773 777" y="524">Device.Bridging.Bridge.1.Port.1.DefaultUserPriority</text>
<text x="1303" y="524">1</text>
<text x="1364" y="524">1</text>
<text x="1428" y="524">0</text>
<text x="1438 1445 1452 1459 1462 1466 1469 1476" y="524">positive</text>
<text x="1670 1677 1684 1691 1694 1698 1701 1708" y="524">positive</text>
<text x="1799" y="524">0</text>
<text x="43 50 57 64 71 78" y="541">316187</text>
<text x="88 97 101 104 111 118 121 128 135 139 148 152 155 162 169 176 180 187 191 200 207 211 215 219 226 230 239 243 246 253 257 260 264 271 280 287 294 301 308 315 319 326 330 333 340" y="541">Bridging.Bridge.1.Port.1.PriorityRegeneration</text>
<text x="489 498 505 512 515 522 529 533 542 546 549 556 563 566 573 580 584 593 597 600 607 614 621 625 632 636 645 652 656 660 664 671 675 684 688 691 698 702 705 709 716 725 732 739 746 753 760 764 771 775 778 785" y="541">Device.Bridging.Bridge.1.Port.1.PriorityRegeneration</text>
<text x="1303" y="541">1</text>
<text x="1364" y="541">1</text>
<text x="1428" y="541">0</text>
<text x="1438 1445 1449 1453 1456 1463" y="541">string</text>
<text x="1799" y="541">0</text>
<text x="43 50 57 64 71 78" y="558">316188</text>
<text x="88 97 101 104 111 118 121 128 135 139 148 152 155 162 169 176 180 187 191 200 207 211 215 219 226 230 239 246 250 254 263 267 274 278" y="558">Bridging.Bridge.1.Port.1.PortState</text>
<text x="489 498 505 512 515 522 529 533 542 546 549 556 563 566 573 580 584 593 597 600 607 614 621 625 632 636 645 652 656 660 664 671 675 684 691 695 699 708 712 719 723" y="558">Device.Bridging.Bridge.1.Port.1.PortState</text>
<text x="1303" y="558">1</text>
<text x="1364" y="558">1</text>
<text x="1428" y="558">0</text>
<text x="1438 1445 1449 1453 1456 1463" y="558">string</text>
<text x="1799" y="558">0</text>
<text x="43 50 57 64 71 78" y="575">316189</text>
<text x="88 97 101 104 111 118 121 128 135 139 148 152 155 162 169 176 180 187 191 200 207 211 215 219 226 230 239 248 252" y="575">Bridging.Bridge.1.Port.1.PVID</text>
<text x="489 498 505 512 515 522 529 533 542 546 549 556 563 566 573 580 584 593 597 600 607 614 621 625 632 636 645 652 656 660 664 671 675 684 693 697" y="575">Device.Bridging.Bridge.1.Port.1.PVID</text>
<text x="1303" y="575">1</text>
<text x="1364" y="575">1</text>
<text x="1428" y="575">0</text>
<text x="1438 1445 1452 1459 1462 1466 1469 1476" y="575">positive</text>
<text x="1670 1677 1684 1691 1694 1698 1701 1708" y="575">positive</text>
<text x="1799" y="575">0</text>
<text x="43 50 57 64 71 78" y="592">316190</text>
<text x="88 97 101 104 111 118 121 128 135 139 148 152 155 162 169 176 180 187 191 200 207 211 215 219 226 230 239 246 253 260 267 271 278 285 288 295 303 307 314 325 332 340 347 354 361" y="592">Bridging.Bridge.1.Port.1.AcceptableFrameTypes</text>
<text x="489 498 505 512 515 522 529 533 542 546 549 556 563 566 573 580 584 593 597 600 607 614 621 625 632 636 645 652 656 660 664 671 675 684 691 698 705 712 716 723 730 733 740 748 752 759 770 777 785 792 799 806" y="592">Device.Bridging.Bridge.1.Port.1.AcceptableFrameTypes</text>
<text x="1303" y="592">1</text>
<text x="1364" y="592">1</text>
<text x="1428" y="592">0</text>
<text x="1438 1445 1449 1453 1456 1463" y="592">string</text>
<text x="1799" y="592">0</text>
<text x="43 50 57 64 71 78" y="609">316191</text>
<text x="88 97 101 104 111 118 121 128 135 139 148 152 155 162 169 176 180 187 191 200 207 211 215 219 226 230 234 241 248 252 259 266 273 281 284 287 291 298 302 305 312" y="609">Bridging.Bridge.1.Port.1.IngressFiltering</text>
<text x="489 498 505 512 515 522 529 533 542 546 549 556 563 566 573 580 584 593 597 600 607 614 621 625 632 636 645 652 656 660 664 671 675 679 686 693 697 704 711 718 726 729 732 736 743 747 750 757" y="609">Device.Bridging.Bridge.1.Port.1.IngressFiltering</text>
<text x="1303" y="609">1</text>
<text x="1364" y="609">1</text>
<text x="1428" y="609">0</text>
<text x="1438 1445 1452 1459 1462 1469 1476" y="609">boolean</text>
<text x="1670 1677 1684 1691 1694 1701 1708" y="609">boolean</text>
<text x="1799" y="609">0</text>
<text x="43 50 57 64 71 78" y="626">316192</text>
<text x="88 97 101 104 111 118 121 128 135 139 148 152 155 162 169 176 180 187 191 200 207 211 215 219 226 230 239 243 246 253 257 260 264 271 279 286 293 300 303 310" y="626">Bridging.Bridge.1.Port.1.PriorityTagging</text>
<text x="489 498 505 512 515 522 529 533 542 546 549 556 563 566 573 580 584 593 597 600 607 614 621 625 632 636 645 652 656 660 664 671 675 684 688 691 698 702 705 709 716 724 731 738 745 748 755" y="626">Device.Bridging.Bridge.1.Port.1.PriorityTagging</text>
<text x="1303" y="626">1</text>
<text x="1364" y="626">1</text>
<text x="1428" y="626">0</text>
<text x="1438 1445 1452 1459 1462 1469 1476" y="626">boolean</text>
<text x="1670 1677 1684 1691 1694 1701 1708" y="626">boolean</text>
<text x="1799" y="626">0</text>
<text x="43 50 57 64 71 78" y="643">316193</text>
<text x="88 97 101 104 111 118 121 128 135 139 148 152 155 162 169 176 180 187 191 200 207 211 215 219 226 230 239 246 254 262 271 275 284 294 305 312 321 328 337 346 355 362 369 376 379" y="643">Bridging.Bridge.1.Port.1.X_ZTE-COM_VLANEnable</text>
<text x="489 498 505 512 515 522 529 533 542 546 549 556 563 566 573 580 584 593 597 600 607 614 621 625 632 636 645 652 656 660 664 671 675 684 691 699 707 716 720 729 739 750 757 766 773 782 791 800 807 814 821 824" y="643">Device.Bridging.Bridge.1.Port.1.X_ZTE-COM_VLANEnable</text>
<text x="1303" y="643">1</text>
<text x="1364" y="643">1</text>
<text x="1428" y="643">0</text>
<text x="1438 1445 1452 1459 1462 1469 1476" y="643">boolean</text>
<text x="1670 1677 1684 1691 1694 1701 1708" y="643">boolean</text>
<text x="1799" y="643">0</text>
<text x="43 50 57 64 71 78" y="660">316194</text>
<text x="88 97 101 104 111 118 121 128 135 139 148 152 155 162 169 176 180 187 191 200 207 211 215 219 226 230 239 246 254 262 271 275 284 294 305 312 321 328 337 346 350" y="660">Bridging.Bridge.1.Port.1.X_ZTE-COM_VLANID</text>
<text x="489 498 505 512 515 522 529 533 542 546 549 556 563 566 573 580 584 593 597 600 607 614 621 625 632 636 645 652 656 660 664 671 675 684 691 699 707 716 720 729 739 750 757 766 773 782 791 795" y="660">Device.Bridging.Bridge.1.Port.1.X_ZTE-COM_VLANID</text>
<text x="1303" y="660">1</text>
<text x="1364" y="660">1</text>
<text x="1428" y="660">0</text>
<text x="1438 1445 1452 1459 1462 1466 1469 1476" y="660">positive</text>
<text x="1670 1677 1684 1691 1694 1698 1701 1708" y="660">positive</text>
<text x="1799" y="660">0</text>
<text x="43 50 57 64 71 78" y="677">316195</text>
<text x="88 97 101 104 111 118 121 128 135 139 148 152 155 162 169 176 180 187 191 200 207 211 215 219 226 230 239 246 254 262 271 275 284 294 305 312 319 326 333 340" y="677">Bridging.Bridge.1.Port.1.X_ZTE-COM_8021P</text>
<text x="489 498 505 512 515 522 529 533 542 546 549 556 563 566 573 580 584 593 597 600 607 614 621 625 632 636 645 652 656 660 664 671 675 684 691 699 707 716 720 729 739 750 757 764 771 778 785" y="677">Device.Bridging.Bridge.1.Port.1.X_ZTE-COM_8021P</text>
<text x="1303" y="677">1</text>
<text x="1364" y="677">1</text>
<text x="1428" y="677">0</text>
<text x="1438 1445 1452 1459 1462 1466 1469 1476" y="677">positive</text>
<text x="1670 1677 1684 1691 1694 1698 1701 1708" y="677">positive</text>
<text x="1799" y="677">0</text>
<text x="43 50 57 64 71 78" y="694">316196</text>
<text x="88 97 101 104 111 118 121 128 135 139 148 152 155 162 169 176 180 187 191 200 207 211 215 219 226 230 239 243 250 254" y="694">Bridging.Bridge.1.Port.1.Stats</text>
<text x="489 498 505 512 515 522 529 533 542 546 549 556 563 566 573 580 584 593 597 600 607 614 621 625 632 636 645 652 656 660 664 671 675 684 688 695 699 706" y="694">Device.Bridging.Bridge.1.Port.1.Stats.</text>
<text x="1303" y="694">1</text>
<text x="1364" y="694">1</text>
<text x="1428" y="694">0</text>
<text x="1438 1445 1449 1453 1456 1463" y="694">string</text>
<text x="1799" y="694">0</text>
<text x="43 50 57 64 71 78" y="711">316197</text>
<text x="88 97 101 104 111 118 121 128 135 139 148 152 155 162 169 176 180 187 191 200 207 211 215 219 226 230 239 243 250 254 261 265 274 281 285 292 299 308 315 322" y="711">Bridging.Bridge.1.Port.1.Stats.BytesSent</text>
<text x="489 498 505 512 515 522 529 533 542 546 549 556 563 566 573 580 584 593 597 600 607 614 621 625 632 636 645 652 656 660 664 671 675 684 688 695 699 706 710 719 726 730 737 744 753 760 767" y="711">Device.Bridging.Bridge.1.Port.1.Stats.BytesSent</text>
<text x="1303" y="711">1</text>
<text x="1364" y="711">1</text>
<text x="1428" y="711">0</text>
<text x="1438 1445 1452 1459 1463 1470 1474 1478 1481 1488" y="711">xsd:string</text>
<text x="1670 1677 1684 1691 1695 1702 1706 1710 1713 1720" y="711">xsd:string</text>
<text x="1799" y="711">0</text>
<text x="43 50 57 64 71 78" y="728">316198</text>
<text x="88 97 101 104 111 118 121 128 135 139 148 152 155 162 169 176 180 187 191 200 207 211 215 219 226 230 239 243 250 254 261 265 274 281 285 292 299 308 315 322 329 332 339 346" y="728">Bridging.Bridge.1.Port.1.Stats.BytesReceived</text>
<text x="489 498 505 512 515 522 529 533 542 546 549 556 563 566 573 580 584 593 597 600 607 614 621 625 632 636 645 652 656 660 664 671 675 684 688 695 699 706 710 719 726 730 737 744 753 760 767 774 777 784 791" y="728">Device.Bridging.Bridge.1.Port.1.Stats.BytesReceived</text>
<text x="1303" y="728">1</text>
<text x="1364" y="728">1</text>
<text x="1428" y="728">0</text>
<text x="1438 1445 1452 1459 1463 1470 1474 1478 1481 1488" y="728">xsd:string</text>
<text x="1670 1677 1684 1691 1695 1702 1706 1710 1713 1720" y="728">xsd:string</text>
<text x="1799" y="728">0</text>
<text x="43 50 57 64 71 78" y="745">316199</text>
<text x="88 97 101 104 111 118 121 128 135 139 148 152 155 162 169 176 180 187 191 200 207 211 215 219 226 230 239 243 250 254 261 265 274 281 288 295 302 306 313 322 329 336" y="745">Bridging.Bridge.1.Port.1.Stats.PacketsSent</text>
<text x="489 498 505 512 515 522 529 533 542 546 549 556 563 566 573 580 584 593 597 600 607 614 621 625 632 636 645 652 656 660 664 671 675 684 688 695 699 706 710 719 726 733 740 747 751 758 767 774 781" y="745">Device.Bridging.Bridge.1.Port.1.Stats.PacketsSent</text>
<text x="1303" y="745">1</text>
<text x="1364" y="745">1</text>
<text x="1428" y="745">0</text>
<text x="1438 1445 1452 1459 1463 1470 1474 1478 1481 1488" y="745">xsd:string</text>
<text x="1670 1677 1684 1691 1695 1702 1706 1710 1713 1720" y="745">xsd:string</text>
<text x="1799" y="745">0</text>
<text x="43 50 57 64 71 78" y="762">316200</text>
<text x="88 97 101 104 111 118 121 128 135 139 148 152 155 162 169 176 180 187 191 200 207 211 215 219 226 230 239 243 250 254 261 265 274 281 288 295 302 306 313 322 329 336 343 346 353 360" y="762">Bridging.Bridge.1.Port.1.Stats.PacketsReceived</text>
<text x="489 498 505 512 515 522 529 533 542 546 549 556 563 566 573 580 584 593 597 600 607 614 621 625 632 636 645 652 656 660 664 671 675 684 688 695 699 706 710 719 726 733 740 747 751 758 767 774 781 788 791 798 805" y="762">Device.Bridging.Bridge.1.Port.1.Stats.PacketsReceived</text>
<text x="1303" y="762">1</text>
<text x="1364" y="762">1</text>
<text x="1428" y="762">0</text>
<text x="1438 1445 1452 1459 1463 1470 1474 1478 1481 1488" y="762">xsd:string</text>
<text x="1670 1677 1684 1691 1695 1702 1706 1710 1713 1720" y="762">xsd:string</text>
<text x="1799" y="762">0</text>
<text x="43 50 57 64 71 78" y="779">316201</text>
<text x="88 97 101 104 111 118 121 128 135 139 148 152 155 162 169 176 180 187 191 200 207 211 215 219 226 230 239 243 250 254 261 265 274 278 282 289 293 300 309 316 323" y="779">Bridging.Bridge.1.Port.1.Stats.ErrorsSent</text>
<text x="489 498 505 512 515 522 529 533 542 546 549 556 563 566 573 580 584 593 597 600 607 614 621 625 632 636 645 652 656 660 664 671 675 684 688 695 699 706 710 719 723 727 734 738 745 754 761 768" y="779">Device.Bridging.Bridge.1.Port.1.Stats.ErrorsSent</text>
<text x="1303" y="779">1</text>
<text x="1364" y="779">1</text>
<text x="1428" y="779">0</text>
<text x="1438 1445 1452 1459 1462 1466 1469 1476" y="779">positive</text>
<text x="1670 1677 1684 1691 1694 1698 1701 1708" y="779">positive</text>
<text x="1799" y="779">0</text>
<text x="43 50 57 64 71 78" y="796">316202</text>
<text x="88 97 101 104 111 118 121 128 135 139 148 152 155 162 169 176 180 187 191 200 207 211 215 219 226 230 239 243 250 254 261 265 274 278 282 289 293 300 309 316 323 330 333 340 347" y="796">Bridging.Bridge.1.Port.1.Stats.ErrorsReceived</text>
<text x="489 498 505 512 515 522 529 533 542 546 549 556 563 566 573 580 584 593 597 600 607 614 621 625 632 636 645 652 656 660 664 671 675 684 688 695 699 706 710 719 723 727 734 738 745 754 761 768 775 778 785 792" y="796">Device.Bridging.Bridge.1.Port.1.Stats.ErrorsReceived</text>
<text x="1303" y="796">1</text>
<text x="1364" y="796">1</text>
<text x="1428" y="796">0</text>
<text x="1438 1445 1452 1459 1462 1466 1469 1476" y="796">positive</text>
<text x="1670 1677 1684 1691 1694 1698 1701 1708" y="796">positive</text>
<text x="1799" y="796">0</text>
<text x="43 50 57 64 71 78" y="813">316203</text>
<text x="88 97 101 104 111 118 121 128 135 139 148 152 155 162 169 176 180 187 191 200 207 211 215 219 226 230 239 243 250 254 261 265 274 281 284 291 298 305 309 318 325 332 339 346 350 357 366 373 380" y="813">Bridging.Bridge.1.Port.1.Stats.UnicastPacketsSent</text>
<text x="489 498 505 512 515 522 529 533 542 546 549 556 563 566 573 580 584 593 597 600 607 614 621 625 632 636 645 652 656 660 664 671 675 684 688 695 699 706 710 719 726 729 736 743 750 754 763 770 777 784 791 795 802 811 818 825" y="813">Device.Bridging.Bridge.1.Port.1.Stats.UnicastPacketsSent</text>
<text x="1303" y="813">1</text>
<text x="1364" y="813">1</text>
<text x="1428" y="813">0</text>
<text x="1438 1445 1452 1459 1463 1470 1474 1478 1481 1488" y="813">xsd:string</text>
<text x="1670 1677 1684 1691 1695 1702 1706 1710 1713 1720" y="813">xsd:string</text>
<text x="1799" y="813">0</text>
</g></svg>
<div class="abs sel" style="left:487px;top:18px;width:683px;height:800px"></div>
<div class="abs" style="left:487px;top:18px;width:1px;height:800px;background:#84cfcc"></div>
<div class="abs" style="left:1169px;top:18px;width:1px;height:800px;background:#84cfcc"></div>
<div class="abs sel" style="left:1436px;top:18px;width:69px;height:800px"></div>
<div class="abs" style="left:1436px;top:18px;width:1px;height:800px;background:#84cfcc"></div>
<div class="abs" style="left:1504px;top:18px;width:1px;height:800px;background:#84cfcc"></div>
<div class="abs" style="left:1436px;top:18px;width:69px;height:17px;border:2px solid #8fe6e6"></div>
</div>
<div class="abs" style="left:1895px;top:173px;width:14px;height:6px;background:#707070"><div class="abs" style="left:3px;top:2px;width:8px;height:1px;background:#222"></div></div>
<div class="abs" style="left:1898px;top:183px;width:8px;height:34px;border-radius:4px;background:#a2a2a2"></div>
<div class="abs" style="left:1909px;top:134px;width:1px;height:886px;background:#6b6b6b"></div>
<div class="abs" style="left:1910px;top:540px;width:7px;height:73px;background:#8f8f8f"></div>
<div class="abs" style="left:1910px;top:573px;width:0;height:0;border-top:4px solid transparent;border-bottom:4px solid transparent;border-right:5px solid #2c2c2c"></div>
<div class="abs" style="left:1px;top:986px;width:252px;height:8px;border-radius:4px;background:#a2a2a2"></div>
<div class="abs" style="left:1890px;top:985px;width:5px;height:12px;background:#8f8f8f"><div class="abs" style="left:2px;top:2px;width:1px;height:8px;background:#222"></div></div>
<svg class="abs" style="left:775.1px;top:152.5px" width="44" height="44" viewBox="-22 -22 44 44"><circle r="20.300" fill="#8a8a8a"/><circle r="19.800" fill="#fff"/><circle r="18.800" fill="#111"/><circle r="17.700" fill="#ff0000"/><text x="0" y="6.400" text-anchor="middle" font-family="DejaVu Sans,sans-serif" font-weight="bold" font-size="17.500" fill="#fff">1</text></svg>
<svg class="abs" style="left:1432.0px;top:133.8px" width="44" height="44" viewBox="-22 -22 44 44"><circle r="20.300" fill="#8a8a8a"/><circle r="19.800" fill="#fff"/><circle r="18.800" fill="#111"/><circle r="17.700" fill="#ff0000"/><text x="0" y="6.400" text-anchor="middle" font-family="DejaVu Sans,sans-serif" font-weight="bold" font-size="17.500" fill="#fff">2</text></svg>
<svg class="abs" style="left:0;top:997px" width="130" height="23" viewBox="0 997 130 23">
<circle cx="7.1" cy="1008.2" r="1.700" fill="#8c8c8c"/><path d="M18.400 1002.700 L11.600 1008.200 L18.400 1013.700" fill="none" stroke="#8c8c8c" stroke-width="1.700"/>
<rect x="29.300" y="1004.300" width="1.600" height="7.800" fill="#8c8c8c"/><path d="M38 1004.300 v7.800 l-6.300 -3.900z M44.800 1004.300 v7.800 l-6.300 -3.900z" fill="#8c8c8c"/>
<rect x="66.600" y="1004.300" width="1.600" height="7.800" fill="#8c8c8c"/><path d="M52 1004.300 v7.800 l6.300 -3.900z M58.800 1004.300 v7.800 l6.300 -3.900z" fill="#8c8c8c"/>
<circle cx="89.700" cy="1008.200" r="1.700" fill="#8c8c8c"/><path d="M78.600 1002.700 L85.400 1008.200 L78.600 1013.700" fill="none" stroke="#8c8c8c" stroke-width="1.700"/>
<path d="M107.400 1001.300 h7 l3.600 3.600 v9.600 a1.500 1.500 0 0 1 -1.500 1.500 h-9.100 a1.500 1.500 0 0 1 -1.500 -1.500 v-11.700 a1.500 1.500 0 0 1 1.500 -1.500z" fill="#e6e6e6"/>
<path d="M112 1005.800 v7 M108.500 1009.300 h7" stroke="#2a2a2a" stroke-width="1.700"/>
</svg>
<div class="abs" style="left:130px;top:997px;width:148px;height:21px;background:#272727"></div>
<div class="abs" style="left:130px;top:1017px;width:148px;height:3px;background:#8a8a8a"></div>
<div class="abs ut" style="left:141.56px;top:997.86px;font-size:12.80px;font-weight:bold;color:#f0f0f0;transform:scaleX(0.9338);">Parameter-2024-08-30</div>
<div class="abs ut" style="left:288.53px;top:997.86px;font-size:12.80px;color:#dcdcdc;transform:scaleX(0.9450);">Sheet2</div>
<div class="abs" style="left:0;top:1020px;width:1909px;height:1px;background:#5a5a5a"></div>
<div class="abs ut" style="left:6.55px;top:1021.76px;font-size:12.80px;color:#dcdcdc;transform:scaleX(0.9186);">Sheet 1 of 2</div>
<div class="abs ut" style="left:293.75px;top:1021.76px;font-size:12.80px;color:#dcdcdc;transform:scaleX(0.9147);">Selected: 1,048,576 rows, 2 columns</div>
<div class="abs ut" style="left:703.87px;top:1021.76px;font-size:12.80px;color:#dcdcdc;transform:scaleX(1.0266);">Default</div>
<div class="abs ut" style="left:1091.39px;top:1021.76px;font-size:12.80px;color:#dcdcdc;transform:scaleX(1.0079);">[None]</div>
<div class="abs ut" style="left:1524.90px;top:1021.76px;font-size:12.80px;color:#dcdcdc;transform:scaleX(0.8955);">Average: ; Sum: 0</div>
<div class="abs ut" style="left:1877.64px;top:1021.76px;font-size:12.80px;color:#dcdcdc;transform:scaleX(0.8832);">100%</div>
<div class="abs ssep" style="left:285px"></div>
<div class="abs ssep" style="left:695px"></div>
<div class="abs ssep" style="left:960px"></div>
<div class="abs ssep" style="left:1255px"></div>
<div class="abs ssep" style="left:1324px"></div>
<div class="abs ssep" style="left:1353px"></div>
<div class="abs ssep" style="left:1382px"></div>
<div class="abs ssep" style="left:1411px"></div>
<div class="abs ssep" style="left:1727px"></div>
<div class="abs ssep" style="left:1870px"></div>
<svg class="abs" style="left:1320px;top:1021px" width="597" height="21" viewBox="1320 1021 597 21">
<path d="M1332 1027.600 h5 M1332 1036.300 h5 M1334.500 1027.600 v8.700" stroke="#a8a8a8" stroke-width="1" fill="none"/>
<path d="M1340.500 1034.200 v1.600 h6 v-1.600" stroke="#a8a8a8" stroke-width="1" fill="none"/>
<rect x="1365.600" y="1026.500" width="6.800" height="9" rx="0.800" fill="#f0f0f0" stroke="#151515" stroke-width="0.800"/>
<circle cx="1372.500" cy="1032.400" r="3.200" fill="#d8283a"/>
<circle cx="1741.500" cy="1032.300" r="4.700" fill="#ececec"/><rect x="1738.500" y="1031.500" width="6" height="1.500" fill="#333"/>
<rect x="1752" y="1031.800" width="97" height="2" rx="1" fill="#9c9c9c"/>
<circle cx="1799.900" cy="1032.100" r="4.300" fill="#dadada"/><path d="M1799.900 1028 v8" stroke="#bdbdbd" stroke-width="0.800"/>
<circle cx="1859.500" cy="1032.300" r="4.700" fill="#ececec"/><path d="M1856.500 1032.300 h6 M1859.500 1029.300 v6" stroke="#333" stroke-width="1.400"/>
</svg>
</div></body></html>
